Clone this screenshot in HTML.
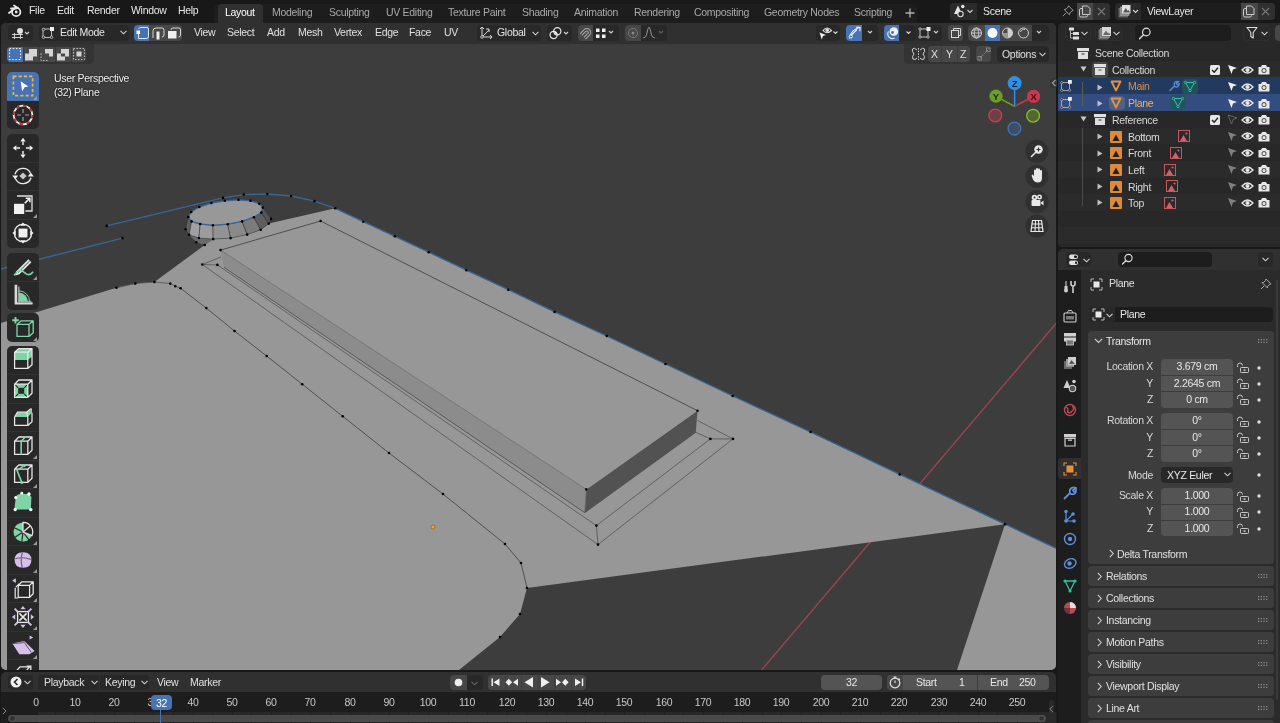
<!DOCTYPE html>
<html><head><meta charset="utf-8">
<style>
*{box-sizing:border-box;margin:0;padding:0}
html,body{width:1280px;height:723px;overflow:hidden;background:#181818;font-family:"Liberation Sans",sans-serif;font-size:10.5px;color:#e0e0e0}
.a{position:absolute}
.t{position:absolute;white-space:nowrap;line-height:12px;letter-spacing:-0.3px;will-change:transform}
.dd{position:absolute;background:#282828;border-radius:4px}
.bt{position:absolute;background:#474747}
.blue{background:#4772b3}
svg{position:absolute;overflow:visible}
</style></head><body>

<!-- TOP BAR -->
<div class="a" style="left:0;top:0;width:1280px;height:23px;background:#181818"></div>
<svg style="left:8px;top:4px" width="14" height="14" viewBox="0 0 14 14">
  <circle cx="8.2" cy="8" r="4.2" fill="none" stroke="#e8e8e8" stroke-width="1.8"/>
  <circle cx="8.2" cy="8" r="1.4" fill="#e8e8e8"/>
  <path d="M1 9 L6 5 M3 4.5 L8 4.5 M6 1.5 L10 4" stroke="#e8e8e8" stroke-width="1.8" stroke-linecap="round"/>
</svg>
<div class="t" style="left:29px;top:4px;color:#e6e6e6">File</div>
<div class="t" style="left:57px;top:4px;color:#e6e6e6">Edit</div>
<div class="t" style="left:87px;top:4px;color:#e6e6e6">Render</div>
<div class="t" style="left:131px;top:4px;color:#e6e6e6">Window</div>
<div class="t" style="left:178px;top:4px;color:#e6e6e6">Help</div>
<div class="a" style="left:214px;top:4px;width:703px;height:19px;background:#1d1d1d;border-radius:4px 4px 0 0"></div>
<div class="a" style="left:218px;top:4px;width:45px;height:19px;background:#303030;border-radius:4px 4px 0 0"></div>
<div class="t" style="left:225px;top:6px;color:#ffffff">Layout</div>
<div class="t" style="left:272px;top:6px;color:#a9a9a9">Modeling</div>
<div class="t" style="left:329px;top:6px;color:#a9a9a9">Sculpting</div>
<div class="t" style="left:386px;top:6px;color:#a9a9a9">UV Editing</div>
<div class="t" style="left:448px;top:6px;color:#a9a9a9">Texture Paint</div>
<div class="t" style="left:522px;top:6px;color:#a9a9a9">Shading</div>
<div class="t" style="left:574px;top:6px;color:#a9a9a9">Animation</div>
<div class="t" style="left:634px;top:6px;color:#a9a9a9">Rendering</div>
<div class="t" style="left:694px;top:6px;color:#a9a9a9">Compositing</div>
<div class="t" style="left:764px;top:6px;color:#a9a9a9">Geometry Nodes</div>
<div class="t" style="left:854px;top:6px;color:#a9a9a9">Scripting</div>
<svg style="left:905px;top:8px" width="10" height="10"><path d="M5 0.5V9.5M0.5 5H9.5" stroke="#b0b0b0" stroke-width="1.3"/></svg>

<!-- scene selector -->
<div class="a" style="left:950px;top:3px;width:160px;height:16.5px;background:#2a2a2a;border-radius:4px"></div>
<div class="a" style="left:977px;top:3px;width:100px;height:16.5px;background:#1d1d1d"></div>
<div class="a" style="left:1077px;top:3px;width:16px;height:16.5px;background:#474747"></div>
<div class="a" style="left:1093px;top:3px;width:17px;height:16.5px;background:#303030;border-radius:0 4px 4px 0"></div>
<div class="t" style="left:983px;top:5px;color:#e6e6e6">Scene</div>
<svg style="left:953px;top:4px" width="23" height="14" viewBox="0 0 23 14">
 <path d="M5 1.5L9 10H1Z" fill="#e8e8e8"/><circle cx="7.5" cy="10" r="2.7" fill="#2a2a2a" stroke="#d8d8d8" stroke-width="1.1"/><circle cx="9.8" cy="2.5" r="1.7" fill="#e8e8e8"/>
 <path d="M14.5 6l2.5 2.5 2.5-2.5" stroke="#d0d0d0" stroke-width="1.1" fill="none"/>
</svg>
<svg style="left:1062px;top:5px" width="12" height="12" viewBox="0 0 12 12">
 <path d="M6.5 0.8L11.2 5.5L9.8 6L7.8 8L7.5 9.8L2.2 4.5L4 4.2L6 2.2Z" fill="none" stroke="#999" stroke-width="1"/><path d="M4.5 7.5L0.8 11.2" stroke="#999" stroke-width="1"/>
</svg>
<svg style="left:1079px;top:5px" width="12" height="13" viewBox="0 0 12 13">
 <rect x="0.5" y="3.5" width="8" height="8.5" rx="1.5" fill="none" stroke="#c8c8c8" stroke-width="1"/><path d="M3.5 1H8.5L11 3.5V9.5H3.5Z" fill="#474747" stroke="#c8c8c8" stroke-width="1"/>
</svg>
<svg style="left:1097px;top:7px" width="9" height="9"><path d="M1 1L8 8M8 1L1 8" stroke="#777" stroke-width="1.1"/></svg>
<div class="a" style="left:1115px;top:3px;width:159.5px;height:16.5px;background:#2a2a2a;border-radius:4px"></div>
<div class="a" style="left:1141px;top:3px;width:100px;height:16.5px;background:#1d1d1d"></div>
<div class="a" style="left:1241px;top:3px;width:16.5px;height:16.5px;background:#474747"></div>
<div class="a" style="left:1257.5px;top:3px;width:17px;height:16.5px;background:#303030;border-radius:0 4px 4px 0"></div>
<div class="t" style="left:1147px;top:5px;color:#e6e6e6">ViewLayer</div>
<svg style="left:1118px;top:4px" width="23" height="14" viewBox="0 0 23 14">
 <rect x="1" y="4.5" width="8.5" height="8.5" fill="#5a5a5a" stroke="#888" stroke-width=".6"/><rect x="2.5" y="3" width="8.5" height="8.5" fill="#888" stroke="#aaa" stroke-width=".6"/><rect x="4" y="1" width="8.5" height="8.5" fill="#e0e0e0"/><path d="M5 8.5L7.8 4L9.8 7L10.8 6L12 8.5Z" fill="#555"/>
 <path d="M15 6l2.5 2.5 2.5-2.5" stroke="#d0d0d0" stroke-width="1.1" fill="none"/>
</svg>
<svg style="left:1243px;top:5px" width="12" height="13" viewBox="0 0 12 13">
 <rect x="0.5" y="3.5" width="8" height="8.5" rx="1.5" fill="none" stroke="#c8c8c8" stroke-width="1"/><path d="M3.5 1H8.5L11 3.5V9.5H3.5Z" fill="#474747" stroke="#c8c8c8" stroke-width="1"/>
</svg>
<svg style="left:1261px;top:7px" width="9" height="9"><path d="M1 1L8 8M8 1L1 8" stroke="#777" stroke-width="1.1"/></svg>

<!-- VIEWPORT AREA -->
<div id="vp" class="a" style="left:1px;top:23px;width:1055px;height:647px;background:#3d3d3d;border-radius:5px;overflow:hidden">
<svg style="left:0;top:0" width="1055" height="647" viewBox="1 23 1055 647">
<!-- GEOMETRY -->
<line x1="1056" y1="323.5" x2="761.6" y2="670" stroke="#9a4452" stroke-width="1.4"/>
<polygon points="1,323 116.4,287.8 135.3,283.6 154.4,282 204.7,245 213.2,239.1 230.6,238.1 247.2,234.6 260.7,229.7 268.8,223.6 335.2,208.3 1005,524.2 527,588 520,614 500,637 459,670 1,670" fill="#979797"/>
<polygon points="1005,524.2 1056,548.5 1056,670 957,670" fill="#979797"/>
<polygon points="189.1,234.8 198.9,238 213.2,239.1 204.7,245 196.3,242.3" fill="#6a6a6a"/>
<polygon points="188.3,217 191.6,221.4 189.1,234.8 185.6,229.3" fill="#5f5f5f" stroke="#333" stroke-width="0.6" stroke-opacity="0.8"/>
<polygon points="191.6,221.4 200.2,224 198.9,238 189.1,234.8" fill="#a0a0a0" stroke="#333" stroke-width="0.6" stroke-opacity="0.8"/>
<polygon points="200.2,224 212.9,225.3 213.2,239.1 198.9,238" fill="#9c9c9c" stroke="#333" stroke-width="0.6" stroke-opacity="0.8"/>
<polygon points="212.9,225.3 227.7,224.2 230.6,238.1 213.2,239.1" fill="#939393" stroke="#333" stroke-width="0.6" stroke-opacity="0.8"/>
<polygon points="227.7,224.2 242.1,221.4 247.2,234.6 230.6,238.1" fill="#8a8a8a" stroke="#333" stroke-width="0.6" stroke-opacity="0.8"/>
<polygon points="242.1,221.4 253.9,217.2 260.7,229.7 247.2,234.6" fill="#7c7c7c" stroke="#333" stroke-width="0.6" stroke-opacity="0.8"/>
<polygon points="253.9,217.2 261.3,212.6 268.8,223.6 260.7,229.7" fill="#5e5e5e" stroke="#333" stroke-width="0.6" stroke-opacity="0.8"/>
<polygon points="261.3,212.6 262.8,207.6 271.1,218.9 268.8,223.6" fill="#555555" stroke="#333" stroke-width="0.6" stroke-opacity="0.8"/>
<polygon points="188.3,217 191.2,212 199.3,207 211.4,203 224.8,200.8 238.5,199.8 250.5,200.8 259.3,203.7 262.8,207.6 261.3,212.6 253.9,217.2 242.1,221.4 227.7,224.2 212.9,225.3 200.2,224 191.6,221.4" fill="#989898"/>
<polygon points="220.6,250.1 586.3,489.4 584.7,512.7 224,267.3" fill="#8b8c8b"/>
<polygon points="586.3,489.4 697.5,410.7 695.8,432.3 584.7,512.7" fill="#525252"/>
<polygon points="220.6,250.1 320.6,221 697.5,410.7 586.3,489.4" fill="#979797"/>
<polyline points="220.6,250.1 320.6,221 697.5,410.7" stroke="#383838" stroke-width="0.75" fill="none"/>
<polyline points="220.6,250.1 586.3,489.4" stroke="#6a6a6a" stroke-width="0.7" fill="none"/>
<polyline points="224,267.3 584.7,512.7 695.8,432.3" stroke="#4a4a4a" stroke-width="0.8" fill="none"/>
<polyline points="586.3,489.4 584.7,512.7" stroke="#6a6a6a" stroke-width="0.6" fill="none"/>
<polyline points="202.3,264.5 598,544.6 733,438.9 697.5,420.5" stroke="#505050" stroke-width="0.75" fill="none"/>
<polyline points="217.4,264.9 596.4,525.6 710.4,438.9 695.8,432.3" stroke="#505050" stroke-width="0.75" fill="none"/>
<polyline points="202.3,264.5 217.4,264.9" stroke="#505050" stroke-width="0.75" fill="none"/>
<polyline points="202.3,264.5 221,257" stroke="#505050" stroke-width="0.75" fill="none"/>
<polyline points="710.4,438.9 733,438.9" stroke="#505050" stroke-width="0.75" fill="none"/>
<polyline points="596.4,525.6 598,544.6" stroke="#505050" stroke-width="0.75" fill="none"/>
<polyline points="180.6,288.3 206.3,308.1 234.5,331 266.7,356 302.2,384.2 342.7,416.3 389,453 443,494 505,544 521,563 527,588" stroke="#383838" stroke-width="0.75" fill="none"/>
<polyline points="116.4,287.8 135.3,283.6 154.4,282 170.2,283.6 175.3,286.2 180.6,288.3" stroke="#555" stroke-width="0.8" fill="none"/>
<polyline points="106.7,225.9 122.5,238.1" stroke="#383838" stroke-width="0.75" fill="none"/>
<polyline points="223,197.9 243.8,194.6 267.3,194 291.1,196 314.5,201.1 335.2,208.3 363.3,221.7 394.8,236.3 428.7,252.2 466.3,270.2 508.3,289.7 554.6,311.9 606.8,336 665.5,364 732.7,396 810.6,432 899.7,474.4 1005,524.2 1060,550.1" stroke="#3a6696" stroke-width="1.35" fill="none" stroke-linejoin="round"/>
<polyline points="1,269 122.5,238.1" stroke="#3a6696" stroke-width="1.35" fill="none" stroke-linejoin="round"/>
<polyline points="106.7,225.9 223,197.9" stroke="#3a6696" stroke-width="1.35" fill="none" stroke-linejoin="round"/>
<polygon points="188.3,217 191.2,212 199.3,207 211.4,203 224.8,200.8 238.5,199.8 250.5,200.8 259.3,203.7 262.8,207.6 261.3,212.6 253.9,217.2 242.1,221.4 227.7,224.2 212.9,225.3 200.2,224 191.6,221.4" stroke="#3a6696" stroke-width="1.35" fill="none" stroke-linejoin="round"/>
<circle cx="223" cy="197.9" r="1.3" fill="#000"/>
<circle cx="243.8" cy="194.6" r="1.3" fill="#000"/>
<circle cx="267.3" cy="194" r="1.3" fill="#000"/>
<circle cx="291.1" cy="196" r="1.3" fill="#000"/>
<circle cx="314.5" cy="201.1" r="1.3" fill="#000"/>
<circle cx="335.2" cy="208.3" r="1.3" fill="#000"/>
<circle cx="363.3" cy="221.7" r="1.3" fill="#000"/>
<circle cx="394.8" cy="236.3" r="1.3" fill="#000"/>
<circle cx="428.7" cy="252.2" r="1.3" fill="#000"/>
<circle cx="466.3" cy="270.2" r="1.3" fill="#000"/>
<circle cx="508.3" cy="289.7" r="1.3" fill="#000"/>
<circle cx="554.6" cy="311.9" r="1.3" fill="#000"/>
<circle cx="606.8" cy="336" r="1.3" fill="#000"/>
<circle cx="665.5" cy="364" r="1.3" fill="#000"/>
<circle cx="732.7" cy="396" r="1.3" fill="#000"/>
<circle cx="810.6" cy="432" r="1.3" fill="#000"/>
<circle cx="899.7" cy="474.4" r="1.3" fill="#000"/>
<circle cx="1005" cy="524.2" r="1.3" fill="#000"/>
<circle cx="122.5" cy="238.1" r="1.3" fill="#000"/>
<circle cx="106.7" cy="225.9" r="1.3" fill="#000"/>
<circle cx="188.3" cy="217" r="1.3" fill="#000"/>
<circle cx="191.2" cy="212" r="1.3" fill="#000"/>
<circle cx="199.3" cy="207" r="1.3" fill="#000"/>
<circle cx="211.4" cy="203" r="1.3" fill="#000"/>
<circle cx="224.8" cy="200.8" r="1.3" fill="#000"/>
<circle cx="238.5" cy="199.8" r="1.3" fill="#000"/>
<circle cx="250.5" cy="200.8" r="1.3" fill="#000"/>
<circle cx="259.3" cy="203.7" r="1.3" fill="#000"/>
<circle cx="262.8" cy="207.6" r="1.3" fill="#000"/>
<circle cx="261.3" cy="212.6" r="1.3" fill="#000"/>
<circle cx="253.9" cy="217.2" r="1.3" fill="#000"/>
<circle cx="242.1" cy="221.4" r="1.3" fill="#000"/>
<circle cx="227.7" cy="224.2" r="1.3" fill="#000"/>
<circle cx="212.9" cy="225.3" r="1.3" fill="#000"/>
<circle cx="200.2" cy="224" r="1.3" fill="#000"/>
<circle cx="191.6" cy="221.4" r="1.3" fill="#000"/>
<circle cx="185.6" cy="229.3" r="1.3" fill="#000"/>
<circle cx="189.1" cy="234.8" r="1.3" fill="#000"/>
<circle cx="198.9" cy="238" r="1.3" fill="#000"/>
<circle cx="213.2" cy="239.1" r="1.3" fill="#000"/>
<circle cx="230.6" cy="238.1" r="1.3" fill="#000"/>
<circle cx="247.2" cy="234.6" r="1.3" fill="#000"/>
<circle cx="260.7" cy="229.7" r="1.3" fill="#000"/>
<circle cx="268.8" cy="223.6" r="1.3" fill="#000"/>
<circle cx="271.1" cy="218.9" r="1.3" fill="#000"/>
<circle cx="196.3" cy="242.3" r="1.3" fill="#000"/>
<circle cx="204.7" cy="245" r="1.3" fill="#000"/>
<circle cx="180.6" cy="288.3" r="1.3" fill="#000"/>
<circle cx="206.3" cy="308.1" r="1.3" fill="#000"/>
<circle cx="234.5" cy="331" r="1.3" fill="#000"/>
<circle cx="266.7" cy="356" r="1.3" fill="#000"/>
<circle cx="302.2" cy="384.2" r="1.3" fill="#000"/>
<circle cx="342.7" cy="416.3" r="1.3" fill="#000"/>
<circle cx="389" cy="453" r="1.3" fill="#000"/>
<circle cx="443" cy="494" r="1.3" fill="#000"/>
<circle cx="505" cy="544" r="1.3" fill="#000"/>
<circle cx="521" cy="563" r="1.3" fill="#000"/>
<circle cx="527" cy="588" r="1.3" fill="#000"/>
<circle cx="116.4" cy="287.8" r="1.3" fill="#000"/>
<circle cx="135.3" cy="283.6" r="1.3" fill="#000"/>
<circle cx="154.4" cy="282" r="1.3" fill="#000"/>
<circle cx="170.2" cy="283.6" r="1.3" fill="#000"/>
<circle cx="175.3" cy="286.2" r="1.3" fill="#000"/>
<circle cx="220.6" cy="250.1" r="1.3" fill="#000"/>
<circle cx="320.6" cy="221" r="1.3" fill="#000"/>
<circle cx="697.5" cy="410.7" r="1.3" fill="#000"/>
<circle cx="586.3" cy="489.4" r="1.3" fill="#000"/>
<circle cx="202.3" cy="264.5" r="1.3" fill="#000"/>
<circle cx="217.4" cy="264.9" r="1.3" fill="#000"/>
<circle cx="598" cy="544.6" r="1.3" fill="#000"/>
<circle cx="733" cy="438.9" r="1.3" fill="#000"/>
<circle cx="596.4" cy="525.6" r="1.3" fill="#000"/>
<circle cx="710.4" cy="438.9" r="1.3" fill="#000"/>
<circle cx="520" cy="614" r="1.3" fill="#000"/>
<circle cx="500" cy="637" r="1.3" fill="#000"/>
<circle cx="433" cy="527" r="2" fill="#f2a23a" stroke="#6a4a20" stroke-width="0.5"/>
<!-- /GEOMETRY -->
</svg>
</div>
<!-- viewport header -->
<div class="a" style="left:1px;top:23px;width:1055px;height:21px;background:#303030;border-radius:5px 5px 0 0"></div>
<div class="a" style="left:1px;top:44px;width:93px;height:20px;background:#303030;opacity:.75;border-radius:0 0 5px 0"></div>
<div class="a" style="left:904px;top:44px;width:152px;height:20px;background:#303030;opacity:.75;border-radius:0 0 0 5px"></div>
<!-- editor type -->
<div class="dd" style="left:8px;top:25px;width:25px;height:16px"></div>
<svg style="left:11px;top:27px" width="20" height="12" viewBox="0 0 20 12">
 <circle cx="9" cy="4" r="3" fill="#e0e0e0"/>
 <path d="M1 7.5H12M1 10.5H12M3.5 6V12M9.5 8V12" stroke="#d0d0d0" stroke-width="1"/>
 <path d="M14 5l2 2 2-2" stroke="#d0d0d0" stroke-width="1.1" fill="none"/>
</svg>
<!-- mode -->
<div class="dd" style="left:39px;top:25px;width:90px;height:16px"></div>
<svg style="left:42px;top:27px" width="13" height="12" viewBox="0 0 13 12">
 <rect x="1" y="2" width="8.5" height="8.5" fill="none" stroke="#cfcfcf" stroke-width="0.9"/>
 <circle cx="1.5" cy="2.5" r="1.3" fill="#282828" stroke="#cfcfcf" stroke-width=".8"/>
 <circle cx="1.5" cy="10.2" r="1.3" fill="#282828" stroke="#cfcfcf" stroke-width=".8"/>
 <circle cx="9.5" cy="10.2" r="1.3" fill="#282828" stroke="#cfcfcf" stroke-width=".8"/>
 <rect x="8" y="0" width="4" height="4" fill="#f0f0f0"/>
</svg>
<div class="t" style="left:60px;top:26.4px;color:#e6e6e6">Edit Mode</div>
<svg style="left:120px;top:30px" width="7" height="5"><path d="M0.5 0.8l3 3 3-3" stroke="#d0d0d0" stroke-width="1.1" fill="none"/></svg>
<!-- select mode -->
<div class="a blue" style="left:134px;top:25px;width:15px;height:16px;border-radius:4px 0 0 4px"></div>
<div class="bt" style="left:149px;top:25px;width:17px;height:16px"></div>
<div class="bt" style="left:166px;top:25px;width:16px;height:16px;border-radius:0 4px 4px 0"></div>
<svg style="left:135px;top:26px" width="48" height="14" viewBox="0 0 48 14">
 <path d="M3.5 3 Q4 1.5 6 1.5 H12 Q13.5 1.5 13.5 3 V10.5 Q13.5 12.5 11.5 12.5 H3.5 V8" stroke="#e8e8e8" stroke-width="1" fill="none"/>
 <rect x="1.5" y="4.5" width="3.5" height="3.5" fill="#fff"/>
 <path d="M18 12 V5 Q18 2 21 2 H27 Q29 2 29 4 V9 Q29 11 27 11" stroke="#d8d8d8" stroke-width="1" fill="none"/>
 <rect x="21.5" y="5.5" width="3" height="8" fill="#f0f0f0"/>
 <path d="M36 4 Q36 2 38 2 H44 Q45.5 2 45.5 4 V9 Q45.5 11 43.5 11" stroke="#d8d8d8" stroke-width="1" fill="none"/>
 <rect x="33" y="5" width="8.5" height="7.5" fill="#f0f0f0"/>
</svg>
<div class="t" style="left:194px;top:26.4px;color:#e0e0e0">View</div>
<div class="t" style="left:227px;top:26.4px;color:#e0e0e0">Select</div>
<div class="t" style="left:267px;top:26.4px;color:#e0e0e0">Add</div>
<div class="t" style="left:298px;top:26.4px;color:#e0e0e0">Mesh</div>
<div class="t" style="left:334px;top:26.4px;color:#e0e0e0">Vertex</div>
<div class="t" style="left:375px;top:26.4px;color:#e0e0e0">Edge</div>
<div class="t" style="left:409px;top:26.4px;color:#e0e0e0">Face</div>
<div class="t" style="left:444px;top:26.4px;color:#e0e0e0">UV</div>
<!-- global -->
<div class="dd" style="left:477px;top:25px;width:64px;height:16px"></div>
<svg style="left:479px;top:26px" width="14" height="14" viewBox="0 0 14 14">
 <path d="M3 1V11H13M3 11L10 4M1 3L3 1L5 3M11 9L13 11L11 13" stroke="#d8d8d8" stroke-width="1" fill="none"/>
 <path d="M7 3L10 3L10 6" stroke="#d8d8d8" stroke-width="1" fill="none"/>
 <circle cx="3" cy="11" r="1.3" fill="#282828" stroke="#d8d8d8" stroke-width=".8"/>
</svg>
<div class="t" style="left:497px;top:26.4px;color:#e6e6e6">Global</div>
<svg style="left:532px;top:31px" width="7" height="5"><path d="M0.5 0.8l3 3 3-3" stroke="#d0d0d0" stroke-width="1.1" fill="none"/></svg>
<!-- pivot -->
<div class="dd" style="left:547px;top:25px;width:25px;height:16px"></div>
<svg style="left:549px;top:26px" width="22" height="14" viewBox="0 0 22 14">
 <circle cx="8.3" cy="5.3" r="3.6" fill="none" stroke="#e8e8e8" stroke-width="1.2"/><circle cx="4.6" cy="9" r="3.6" fill="none" stroke="#e8e8e8" stroke-width="1.2"/><circle cx="6.45" cy="7.15" r="1.3" fill="#e8e8e8"/>
 <path d="M15 6l2 2 2-2" stroke="#d0d0d0" stroke-width="1.1" fill="none"/>
</svg>
<!-- snap -->
<div class="dd" style="left:578px;top:25px;width:41px;height:16px"></div>
<div class="bt" style="left:578px;top:25px;width:15px;height:16px;border-radius:4px 0 0 4px"></div>
<svg style="left:579px;top:26px" width="40" height="14" viewBox="0 0 40 14">
 <path d="M2 8.5 L6 4.5 A2.6 2.6 0 0 1 9.7 8.2 L5.7 12.2" stroke="#a8a8a8" stroke-width="3.4" fill="none"/><path d="M2 8.5 L6 4.5 A2.6 2.6 0 0 1 9.7 8.2 L5.7 12.2" stroke="#474747" stroke-width="1.3" fill="none"/>
 <rect x="17" y="2.5" width="3.5" height="3.5" fill="#f0f0f0"/><rect x="23" y="2.5" width="3.5" height="3.5" fill="#f0f0f0"/>
 <rect x="17" y="8.5" width="3.5" height="3.5" fill="#f0f0f0"/><rect x="23" y="8.5" width="3.5" height="3.5" fill="#f0f0f0"/>
 <path d="M30 5l2 2 2-2" stroke="#d0d0d0" stroke-width="1.1" fill="none"/>
</svg>
<!-- proportional -->
<div class="dd" style="left:625px;top:25px;width:42px;height:16px"></div>
<div class="bt" style="left:625px;top:25px;width:16px;height:16px;border-radius:4px 0 0 4px"></div>
<svg style="left:626px;top:26px" width="40" height="14" viewBox="0 0 40 14">
 <circle cx="7" cy="7" r="4.5" fill="none" stroke="#7a7a7a" stroke-width="1"/><circle cx="7" cy="7" r="1.5" fill="#8a8a8a"/>
 <path d="M17 12 Q20 12 21 7 Q22 1.5 23 1.5 Q24 1.5 25 7 Q26 12 29 12" stroke="#8e8e8e" stroke-width="1.1" fill="none"/>
 <path d="M33 5l2 2 2-2" stroke="#5e5e5e" stroke-width="1.1" fill="none"/>
</svg>
<!-- visibility -->
<div class="dd" style="left:816px;top:25px;width:24px;height:16px"></div>
<svg style="left:818px;top:26px" width="22" height="14" viewBox="0 0 22 14">
 <path d="M5 4.5 Q9 -0.5 13.5 4.5 Q9 9 5 4.5Z" fill="none" stroke="#e8e8e8" stroke-width="1.1"/><circle cx="9.2" cy="4.3" r="1.8" fill="#e8e8e8"/>
 <path d="M1.5 6.5 L8 9 L5 10 L3.8 13.5Z" fill="#f0f0f0"/>
 <path d="M15.5 5.5l2 2 2-2" stroke="#d0d0d0" stroke-width="1.1" fill="none"/>
</svg>
<!-- gizmo -->
<div class="dd" style="left:846px;top:25px;width:32px;height:16px"></div>
<div class="a blue" style="left:846px;top:25px;width:16px;height:16px;border-radius:4px 0 0 4px"></div>
<svg style="left:847px;top:26px" width="31" height="14" viewBox="0 0 31 14">
 <path d="M2.5 12.5 Q3.5 4 12.5 1.5 M9 1.2 H13 V5.2 M4 9.5 L10 3.5" stroke="#f0f0f0" stroke-width="1.1" fill="none"/>
 <circle cx="3.8" cy="10.5" r="1.6" fill="#4772b3" stroke="#f0f0f0" stroke-width="1"/>
 <path d="M21 5l2 2 2-2" stroke="#d0d0d0" stroke-width="1.1" fill="none"/>
</svg>
<!-- overlays -->
<div class="dd" style="left:884px;top:25px;width:32px;height:16px"></div>
<div class="a blue" style="left:884px;top:25px;width:15px;height:16px;border-radius:4px 0 0 4px"></div>
<svg style="left:885px;top:26px" width="31" height="14" viewBox="0 0 31 14">
 <circle cx="8.8" cy="5.5" r="4.3" fill="#f0f0f0"/><circle cx="7.5" cy="6.5" r="1.4" fill="#4772b3"/>
 <path d="M3.5 5.5 A4.6 4.6 0 0 0 9.5 12" stroke="#f0f0f0" stroke-width="1.1" fill="none"/>
 <path d="M21.5 5.5l2 2 2-2" stroke="#d0d0d0" stroke-width="1.1" fill="none"/>
</svg>
<!-- mesh overlay -->
<div class="dd" style="left:917px;top:25px;width:25px;height:16px"></div>
<svg style="left:918px;top:26px" width="24" height="14" viewBox="0 0 24 14">
 <rect x="2" y="3" width="8" height="8" fill="none" stroke="#cfcfcf" stroke-width=".9"/>
 <circle cx="2" cy="3" r="1.2" fill="#282828" stroke="#cfcfcf" stroke-width=".8"/><circle cx="2" cy="11" r="1.2" fill="#282828" stroke="#cfcfcf" stroke-width=".8"/><circle cx="10" cy="11" r="1.2" fill="#282828" stroke="#cfcfcf" stroke-width=".8"/>
 <rect x="8.5" y="1" width="4" height="4" fill="#f0f0f0"/>
 <path d="M16 5l2 2 2-2" stroke="#d0d0d0" stroke-width="1.1" fill="none"/>
</svg>
<!-- xray -->
<div class="bt" style="left:948px;top:25px;width:15px;height:16px;border-radius:4px"></div>
<svg style="left:949px;top:26px" width="14" height="14" viewBox="0 0 14 14">
 <rect x="2.5" y="4.5" width="7" height="7" fill="none" stroke="#d8d8d8" stroke-width="1"/>
 <path d="M4.5 4.5 V2.5 H11.5 V9.5 H9.5" stroke="#d8d8d8" stroke-width="1" fill="none"/>
</svg>
<!-- shading -->
<div class="dd" style="left:968px;top:25px;width:81px;height:16px"></div>
<div class="bt" style="left:968px;top:25px;width:17px;height:16px;border-radius:4px 0 0 4px"></div>
<div class="a blue" style="left:985px;top:25px;width:15px;height:16px"></div>
<div class="bt" style="left:1000px;top:25px;width:32px;height:16px"></div>
<svg style="left:969px;top:26px" width="80" height="14" viewBox="0 0 80 14">
 <circle cx="7.5" cy="7" r="5" fill="none" stroke="#d0d0d0" stroke-width="1"/>
 <ellipse cx="7.5" cy="7" rx="2.2" ry="5" fill="none" stroke="#d0d0d0" stroke-width=".9"/>
 <path d="M2.5 7H12.5M3.5 4H11.5M3.5 10H11.5" stroke="#d0d0d0" stroke-width=".9"/>
 <circle cx="23.5" cy="7" r="5" fill="#fff"/>
 <circle cx="38.5" cy="7" r="5" fill="none" stroke="#d0d0d0" stroke-width="1"/>
 <path d="M38.5 2 A5 5 0 0 1 38.5 12Z" fill="#d0d0d0"/><path d="M38.5 7 H33.5 A5 5 0 0 0 38.5 12Z" fill="#9a9a9a"/>
 <circle cx="54.5" cy="7" r="5" fill="none" stroke="#d0d0d0" stroke-width="1"/>
 <path d="M51.5 6 A3.5 3.5 0 0 1 56 3.5" stroke="#d0d0d0" stroke-width="1" fill="none"/>
 <path d="M68 5l2 2 2-2" stroke="#d0d0d0" stroke-width="1.1" fill="none"/>
</svg>
<!-- row 2 left: select box mode -->
<div class="bt" style="left:7px;top:46.5px;width:79px;height:15.5px;border-radius:4px"></div>
<div class="a blue" style="left:7px;top:46.5px;width:16px;height:15.5px;border-radius:4px 0 0 4px"></div>
<div class="a" style="left:23px;top:46.5px;width:1px;height:15.5px;background:#3a3a3a"></div>
<div class="a" style="left:39px;top:46.5px;width:1px;height:15.5px;background:#3a3a3a"></div>
<div class="a" style="left:55px;top:46.5px;width:1px;height:15.5px;background:#3a3a3a"></div>
<div class="a" style="left:71px;top:46.5px;width:1px;height:15.5px;background:#3a3a3a"></div>
<svg style="left:7px;top:46px" width="80" height="16" viewBox="0 0 80 16">
 <rect x="2.5" y="2.5" width="11" height="11" fill="none" stroke="#f0f0f0" stroke-width="1.1" stroke-dasharray="1.6 1.6"/>
 <path d="M18 7.5H22V3H30V10.5H26V14.5H18Z" fill="#d4d4d4"/>
 <path d="M34 7.5V14.5H41" stroke="#bdbdbd" stroke-width="1" stroke-dasharray="1.5 1.5" fill="none"/><path d="M38 3H46V10.5H42V7.5H38Z" fill="#d4d4d4"/>
 <path d="M50 7.5H54V3H62V10.5H58V14.5H50Z M54 7.5V10.5H58V7.5Z" fill="#d4d4d4" fill-rule="evenodd"/>
 <rect x="66.5" y="2.5" width="11" height="11" fill="none" stroke="#bdbdbd" stroke-width="1" stroke-dasharray="1.5 1.5"/>
 <rect x="69.5" y="5.5" width="5" height="5" fill="#d4d4d4"/>
</svg>
<!-- row 2 right -->
<svg style="left:911px;top:47px" width="15" height="14" viewBox="0 0 15 14">
 <path d="M7.5 1V13" stroke="#cfcfcf" stroke-width="1" stroke-dasharray="1.5 1.2"/>
 <path d="M6 3 Q3 0 1.5 2 Q0.5 4 3 7 Q0.5 10 2 12 Q4 13.5 6 11 M9 3 Q12 0 13.5 2 Q14.5 4 12 7 Q14.5 10 13 12 Q11 13.5 9 11" stroke="#cfcfcf" stroke-width="1" fill="none"/>
</svg>
<div class="bt" style="left:928px;top:46px;width:42px;height:16px;border-radius:4px"></div>
<div class="a" style="left:941px;top:46px;width:1px;height:16px;background:#3d3d3d"></div>
<div class="a" style="left:957px;top:46px;width:1px;height:16px;background:#3d3d3d"></div>
<div class="t" style="left:931px;top:48px;color:#e0e0e0">X</div>
<div class="t" style="left:946px;top:48px;color:#e0e0e0">Y</div>
<div class="t" style="left:960px;top:48px;color:#e0e0e0">Z</div>
<div class="bt" style="left:976px;top:46px;width:15px;height:16px;border-radius:4px;background:#474747"></div>
<svg style="left:977px;top:47px" width="14" height="14" viewBox="0 0 14 14">
 <path d="M3 11 L11 3" stroke="#8a8a8a" stroke-width="1" stroke-dasharray="1.5 1"/>
 <rect x="1" y="9.5" width="3.5" height="3.5" fill="none" stroke="#8a8a8a" stroke-width=".9"/><rect x="9.5" y="1" width="3.5" height="3.5" fill="none" stroke="#8a8a8a" stroke-width=".9"/>
</svg>
<div class="dd" style="left:997px;top:46px;width:52px;height:16px"></div>
<div class="t" style="left:1002px;top:48px;color:#e0e0e0">Options</div>
<svg style="left:1039px;top:52px" width="7" height="5"><path d="M0.5 0.8l3 3 3-3" stroke="#d0d0d0" stroke-width="1.1" fill="none"/></svg>
<!-- TOOLBAR -->
<div class="a" style="left:0;top:0;width:46px;height:670px;overflow:hidden">
<div class="a" style="left:7px;top:72px;width:32px;height:57.0px;background:#282828;border-radius:5px"></div>
<div class="a" style="left:7px;top:100.0px;width:32px;height:1px;background:#323232"></div>
<div class="a" style="left:7px;top:133.7px;width:32px;height:114.0px;background:#282828;border-radius:5px"></div>
<div class="a" style="left:7px;top:161.7px;width:32px;height:1px;background:#323232"></div>
<div class="a" style="left:7px;top:190.2px;width:32px;height:1px;background:#323232"></div>
<div class="a" style="left:7px;top:218.7px;width:32px;height:1px;background:#323232"></div>
<div class="a" style="left:7px;top:252.6px;width:32px;height:57.0px;background:#282828;border-radius:5px"></div>
<div class="a" style="left:7px;top:280.6px;width:32px;height:1px;background:#323232"></div>
<div class="a" style="left:7px;top:313.4px;width:32px;height:28.5px;background:#282828;border-radius:5px"></div>
<div class="a" style="left:7px;top:346.2px;width:32px;height:342.0px;background:#282828;border-radius:5px"></div>
<div class="a" style="left:7px;top:374.2px;width:32px;height:1px;background:#323232"></div>
<div class="a" style="left:7px;top:402.7px;width:32px;height:1px;background:#323232"></div>
<div class="a" style="left:7px;top:431.2px;width:32px;height:1px;background:#323232"></div>
<div class="a" style="left:7px;top:459.7px;width:32px;height:1px;background:#323232"></div>
<div class="a" style="left:7px;top:488.2px;width:32px;height:1px;background:#323232"></div>
<div class="a" style="left:7px;top:516.7px;width:32px;height:1px;background:#323232"></div>
<div class="a" style="left:7px;top:545.2px;width:32px;height:1px;background:#323232"></div>
<div class="a" style="left:7px;top:573.7px;width:32px;height:1px;background:#323232"></div>
<div class="a" style="left:7px;top:602.2px;width:32px;height:1px;background:#323232"></div>
<div class="a" style="left:7px;top:630.7px;width:32px;height:1px;background:#323232"></div>
<div class="a" style="left:7px;top:659.2px;width:32px;height:1px;background:#323232"></div>
<div class="a blue" style="left:7px;top:72px;width:32px;height:28.5px;border-radius:5px 5px 0 0"></div>
<svg style="left:11px;top:74.2px" width="24" height="24" viewBox="0 0 20 20"><rect x="2" y="2" width="16" height="16" fill="none" stroke="#f0b640" stroke-width="1.4" stroke-dasharray="2.6 1.8"/><path d="M8 6 L14.5 10.5 L11.3 11 L9.3 14.5Z" fill="#fff"/></svg>
<svg style="left:11px;top:102.8px" width="24" height="24" viewBox="0 0 20 20"><circle cx="10" cy="10" r="7.8" fill="none" stroke="#f4f4f4" stroke-width="1.5"/><circle cx="10" cy="10" r="7.8" fill="none" stroke="#b02828" stroke-width="1.5" stroke-dasharray="3 3.1"/><path d="M10 5V8.3M10 11.7V15M5 10H8.3M11.7 10H15" stroke="#a0a0a0" stroke-width="1"/></svg>
<svg style="left:11px;top:135.9px" width="24" height="24" viewBox="0 0 20 20"><path d="M10 1.5L7.8 4.5H12.2ZM10 18.5L7.8 15.5H12.2ZM1.5 10L4.5 7.8V12.2ZM18.5 10L15.5 7.8V12.2Z" fill="#f0f0f0"/><path d="M10 4.5V7.5M10 12.5V15.5M4.5 10H7.5M12.5 10H15.5" stroke="#f0f0f0" stroke-width="1.2"/></svg>
<svg style="left:11px;top:164.4px" width="24" height="24" viewBox="0 0 20 20"><path d="M3.3 8.5 A7 7 0 0 1 16.2 7.5 M16.7 11.5 A7 7 0 0 1 3.8 12.5" stroke="#e8e8e8" stroke-width="1.15" fill="none"/><path d="M1 9.5H6L3.5 13ZM14 10.5H19L16.5 7Z" fill="#f0f0f0"/><path d="M10 7L13 10L10 13L7 10Z" fill="#c8c8c8"/></svg>
<svg style="left:11px;top:192.9px" width="24" height="24" viewBox="0 0 20 20"><path d="M5 2.5H17.5V15H12" stroke="#e0e0e0" stroke-width="1.1" fill="none"/><rect x="2.5" y="9" width="8.5" height="8.5" fill="#f0f0f0"/><path d="M11.5 8.5L15.5 4.5M12.3 4.3H15.7V7.7" stroke="#f0f0f0" stroke-width="1.3" fill="none"/></svg>
<svg style="left:11px;top:221.4px" width="24" height="24" viewBox="0 0 20 20"><circle cx="10" cy="10" r="7.3" fill="none" stroke="#e8e8e8" stroke-width="1.1"/><rect x="6.3" y="6.3" width="7.4" height="7.4" fill="#f0f0f0"/><path d="M10 1.2L7.8 4H12.2ZM10 18.8L7.8 16H12.2ZM1.2 10L4 7.8V12.2ZM18.8 10L16 7.8V12.2Z" fill="#f0f0f0"/></svg>
<svg style="left:11px;top:254.9px" width="24" height="24" viewBox="0 0 20 20"><path d="M4.5 13.5 L14.5 3.5 L17 6 L7 16 L3.5 17Z" fill="#e8e8e8"/><path d="M6 14.5L15.5 5" stroke="#282828" stroke-width=".7"/><path d="M2.5 17 Q7 10.5 11 14.5 Q15 18.5 18.5 14" stroke="#7fd4a6" stroke-width="1.3" fill="none"/></svg>
<svg style="left:11px;top:283.4px" width="24" height="24" viewBox="0 0 20 20"><path d="M3 1.5H5.2V16H18V18H3Z" fill="#d8d8d8"/><path d="M6.5 3V15.5H17" stroke="#9a9a9a" stroke-width="1.3" fill="none"/><path d="M6.5 15.5V8 A7.5 7.5 0 0 1 14 15.5Z" fill="#7fd4a6"/><path d="M6.5 6.5 A9 9 0 0 1 15.5 15.5" stroke="#7fd4a6" stroke-width=".8" fill="none"/></svg>
<svg style="left:11px;top:315.6px" width="24" height="24" viewBox="0 0 20 20"><path d="M5 7H15V17H5Z M5 7L8.5 4H18.5L15 7 M18.5 4V14L15 17" stroke="#7fd4a6" stroke-width="1.1" fill="none" stroke-linejoin="round"/><path d="M1 3.5H6.5M3.75 0.75V6.25" stroke="#7fd4a6" stroke-width="1.6"/></svg>
<svg style="left:11px;top:348.4px" width="24" height="24" viewBox="0 0 20 20"><path d="M3 3.5L6.5 0.5H17.5V7L14 10H3Z" fill="#7fd4a6"/><path d="M3 3.5H14V17.0H3Z M3 3.5L6.5 0.5H17.5L14 3.5 M17.5 0.5V14.0L14 17.0" stroke="#e8e8e8" stroke-width="1.05" fill="none" stroke-linejoin="round"/></svg>
<svg style="left:11px;top:376.9px" width="24" height="24" viewBox="0 0 20 20"><rect x="3" y="6" width="11" height="11" fill="#7fd4a6"/><rect x="6" y="9" width="5" height="5" fill="#282828"/><path d="M3 6L6 9M14 6L11 9M3 17L6 14M14 17L11 14" stroke="#282828" stroke-width=".9"/><path d="M3 6H14V17H3Z M3 6L6.5 2.5H17.5L14 6 M17.5 2.5V13.5L14 17" stroke="#e8e8e8" stroke-width="1.05" fill="none" stroke-linejoin="round"/></svg>
<svg style="left:11px;top:405.4px" width="24" height="24" viewBox="0 0 20 20"><path d="M3 10L5.5 6H13L17.5 3.5V6.5L14 10Z" fill="#7fd4a6"/><path d="M3 10V17H14V10M14 17L17.5 14V6.5 M3 10L5.5 6H13L14 10 M13 6L16 3.5H17.5" stroke="#e8e8e8" stroke-width="1.05" fill="none" stroke-linejoin="round"/></svg>
<svg style="left:11px;top:433.9px" width="24" height="24" viewBox="0 0 20 20"><path d="M3 6H14V17H3Z M3 6L6.5 2.5H17.5L14 6 M17.5 2.5V13.5L14 17" stroke="#e8e8e8" stroke-width="1.05" fill="none" stroke-linejoin="round"/><path d="M8.5 17V6L12 2.5" stroke="#7fd4a6" stroke-width="1.3" fill="none"/></svg>
<svg style="left:11px;top:462.4px" width="24" height="24" viewBox="0 0 20 20"><path d="M3 6H14V17H3Z M3 6L6.5 2.5H17.5L14 6 M17.5 2.5V13.5L14 17" stroke="#e8e8e8" stroke-width="1.05" fill="none" stroke-linejoin="round"/><path d="M11 3L5 7L9 17" stroke="#7fd4a6" stroke-width="1.3" fill="none"/><circle cx="11" cy="3" r="1.4" fill="#7fd4a6"/><circle cx="9" cy="17" r="1.4" fill="#7fd4a6"/></svg>
<svg style="left:11px;top:490.9px" width="24" height="24" viewBox="0 0 20 20"><path d="M3 14 L4 5 Q5 2.5 8 2.5 H15 L17 5 L16.5 15.5 H3.5Z" fill="#7fd4a6"/><circle cx="4" cy="5.5" r="1.4" fill="#fff"/><circle cx="15" cy="2.5" r="1.4" fill="#fff"/><circle cx="16.5" cy="15.5" r="1.4" fill="#fff"/><circle cx="3.5" cy="15.5" r="1.4" fill="#fff"/><circle cx="9" cy="1.8" r="1.2" fill="#fff"/></svg>
<svg style="left:11px;top:519.5px" width="24" height="24" viewBox="0 0 20 20"><path d="M10 10 L10 2 A8 8 0 1 0 17.5 13Z" fill="#7fd4a6"/><path d="M10 10L2.8 6.5M10 10L3 14.5M10 10L9 18M10 10L15 16.5" stroke="#282828" stroke-width="1"/><path d="M10 2 A8 8 0 0 1 17.5 13 L10 10Z" fill="none" stroke="#e8e8e8" stroke-width="1"/><path d="M10 10L16 5" stroke="#e8e8e8" stroke-width="1"/></svg>
<svg style="left:11px;top:548.0px" width="24" height="24" viewBox="0 0 20 20"><path d="M3 10 Q3 3.5 10 3.5 Q17 3.5 17 10 Q17 16.5 10 16.5 Q3 16.5 3 10Z" fill="#d6c0ea"/><path d="M3.5 9 Q10 7 16.5 9.5M9.5 3.5 Q7.5 10 9.5 16.5" stroke="#6f5f80" stroke-width="1" fill="none"/></svg>
<svg style="left:11px;top:576.5px" width="24" height="24" viewBox="0 0 20 20"><path d="M6 7H15.5V17H6Z M6 7L9 4H18.5L15.5 7 M18.5 4V14L15.5 17" stroke="#e8e8e8" stroke-width="1.05" fill="none" stroke-linejoin="round"/><path d="M3.5 9V17.5H6 M4 8.5L7 5.5" stroke="#e8e8e8" stroke-width="1" fill="none"/><path d="M1 3L4 1V5Z" fill="#d6c0ea"/></svg>
<svg style="left:11px;top:605.0px" width="24" height="24" viewBox="0 0 20 20"><rect x="5.5" y="5.5" width="9" height="9" fill="none" stroke="#e8e8e8" stroke-width="1.1"/><path d="M7 7L13 13M13 7L7 13" stroke="#e8e8e8" stroke-width="1.3"/><path d="M10 0.8L7.8 3.5H12.2ZM10 19.2L7.8 16.5H12.2ZM0.8 10L3.5 7.8V12.2ZM19.2 10L16.5 7.8V12.2Z" fill="#d6c0ea"/><path d="M3 3L5.5 5.5M17 3L14.5 5.5M3 17L5.5 14.5M17 17L14.5 14.5" stroke="#d6c0ea" stroke-width="1.6"/></svg>
<svg style="left:11px;top:633.5px" width="24" height="24" viewBox="0 0 20 20"><path d="M1.2 8 L11 5.8 L19.7 14.1 L15.2 16.9 L6.9 16.9Z" fill="#d6c0ea"/><path d="M11 7 L16.9 15.2 M11 5.8 L10.5 7.2 L1.2 8" stroke="#5a4a6a" stroke-width=".8" fill="none"/><path d="M15.5 1.2L18.5 2.9L15.5 4.6Z" fill="#d6c0ea"/></svg>
<svg style="left:11px;top:662.0px" width="24" height="24" viewBox="0 0 20 20"><path d="M4 8 L7.5 4 H15.5 L13 7" stroke="#e8e8e8" stroke-width="1.1" fill="none"/><path d="M13 3.5 H16.5 V7" stroke="#e8e8e8" stroke-width="1.1" fill="none"/></svg>
<svg style="left:33px;top:95.5px" width="4" height="4"><path d="M4 0V4H0Z" fill="#9a9a9a"/></svg>
<svg style="left:33px;top:214.2px" width="4" height="4"><path d="M4 0V4H0Z" fill="#9a9a9a"/></svg>
<svg style="left:33px;top:276.1px" width="4" height="4"><path d="M4 0V4H0Z" fill="#9a9a9a"/></svg>
<svg style="left:33px;top:336.9px" width="4" height="4"><path d="M4 0V4H0Z" fill="#9a9a9a"/></svg>
<svg style="left:33px;top:455.2px" width="4" height="4"><path d="M4 0V4H0Z" fill="#9a9a9a"/></svg>
<svg style="left:33px;top:483.7px" width="4" height="4"><path d="M4 0V4H0Z" fill="#9a9a9a"/></svg>
<svg style="left:33px;top:540.7px" width="4" height="4"><path d="M4 0V4H0Z" fill="#9a9a9a"/></svg>
<svg style="left:33px;top:569.2px" width="4" height="4"><path d="M4 0V4H0Z" fill="#9a9a9a"/></svg>
<svg style="left:33px;top:597.7px" width="4" height="4"><path d="M4 0V4H0Z" fill="#9a9a9a"/></svg>
<svg style="left:33px;top:626.2px" width="4" height="4"><path d="M4 0V4H0Z" fill="#9a9a9a"/></svg>
<svg style="left:33px;top:654.7px" width="4" height="4"><path d="M4 0V4H0Z" fill="#9a9a9a"/></svg>
</div>
<!-- /TOOLBAR -->
<!-- viewport text -->
<div class="t" style="left:54px;top:72px;color:#f0f0f0;text-shadow:0 0 2px #000">User Perspective</div>
<div class="t" style="left:54px;top:86px;color:#f0f0f0;text-shadow:0 0 2px #000">(32) Plane</div>

<!-- OUTLINER -->
<div id="ol" class="a" style="left:1058px;top:23px;width:222px;height:224px;background:#282828;border-radius:4px 0 0 4px;overflow:hidden"></div>

<!-- PROPERTIES -->
<div id="pr" class="a" style="left:1058px;top:249px;width:222px;height:474px;background:#2b2b2b;border-radius:5px 0 0 0;overflow:hidden"></div>

<!-- TIMELINE -->
<div id="tl" class="a" style="left:1px;top:672px;width:1055px;height:51px;background:#1d1d1d;border-radius:5px 5px 0 0;overflow:hidden"></div>

<!-- PANELS -->
<svg style="left:0;top:0" width="1280" height="723" viewBox="0 0 1280 723"><line x1="1014.6" y1="106.3" x2="1014.6" y2="89" stroke="#3090e8" stroke-width="1.5"/><line x1="1014.6" y1="106.3" x2="1000" y2="98.5" stroke="#6a9e28" stroke-width="1.5"/><line x1="1014.6" y1="106.3" x2="1029.5" y2="98.5" stroke="#c8394f" stroke-width="1.5"/><circle cx="995.3" cy="115.5" r="6.4" fill="#6e3f47" stroke="#d33a55" stroke-width="1.3"/><circle cx="1033.1" cy="115.8" r="6.4" fill="#55652f" stroke="#7ec82a" stroke-width="1.3"/><circle cx="1014.4" cy="128.6" r="6.4" fill="#3f4f63" stroke="#3877c0" stroke-width="1.3"/><circle cx="1014.6" cy="83.1" r="7" fill="#3090e8"/><circle cx="996" cy="96.2" r="6.6" fill="#6a9e28"/><circle cx="1033.6" cy="96.3" r="6.6" fill="#c8394f"/><text x="1014.6" y="86.6" font-size="9.5" font-weight="bold" text-anchor="middle" fill="#10233a" font-family="Liberation Sans">Z</text><text x="996" y="99.7" font-size="9.5" font-weight="bold" text-anchor="middle" fill="#1a2a08" font-family="Liberation Sans">Y</text><text x="1033.6" y="99.8" font-size="9.5" font-weight="bold" text-anchor="middle" fill="#3a0d15" font-family="Liberation Sans">X</text><circle cx="1036.9" cy="151.3" r="11.5" fill="#2e2e2e" fill-opacity="0.85"/><circle cx="1036.9" cy="176.3" r="11.5" fill="#2e2e2e" fill-opacity="0.85"/><circle cx="1036.9" cy="201.7" r="11.5" fill="#2e2e2e" fill-opacity="0.85"/><circle cx="1036.9" cy="226.1" r="11.5" fill="#2e2e2e" fill-opacity="0.85"/><circle cx="1038.5" cy="149.5" r="4.2" fill="#e8e8e8"/><path d="M1036.5 149.5h4M1038.5 147.5v4" stroke="#2e2e2e" stroke-width="1.1"/><path d="M1035.5 152.5L1031.5 156.5" stroke="#e8e8e8" stroke-width="1.6" stroke-linecap="round"/><path d="M1032 177 Q1031 174 1032.5 174.5 L1034 176 V170.5 Q1034 169.5 1035 169.5 Q1036 169.5 1036 170.5 V174 V169 Q1036 168 1037 168 Q1038 168 1038 169 V174 V169.5 Q1038 168.5 1039 168.5 Q1040 168.5 1040 169.5 V174.5 V171 Q1040 170 1041 170 Q1042 170 1042 171 V178 Q1042 182.5 1037.5 182.5 Q1034.5 182.5 1033 179.5Z" fill="#e8e8e8"/><circle cx="1034.5" cy="197.5" r="2.8" fill="#e8e8e8"/><circle cx="1039.5" cy="197" r="2.5" fill="#e8e8e8"/><rect x="1031.5" y="200" width="9" height="6" fill="#e8e8e8" rx="1"/><path d="M1040.5 203L1043.5 200.5V205.5Z" fill="#e8e8e8"/><circle cx="1034.5" cy="197.5" r="1" fill="#2e2e2e"/><circle cx="1039.5" cy="197" r="1" fill="#2e2e2e"/><path d="M1032.5 220.5H1041.5L1043 231.5H1031Z" fill="none" stroke="#e8e8e8" stroke-width="1.2"/><path d="M1031.8 224H1042.2M1031.4 227.8H1042.6M1035.5 220.5L1035 231.5M1038.5 220.5L1039 231.5" stroke="#e8e8e8" stroke-width="1.1"/></svg>
<div class="a" style="left:1050px;top:78px;width:7px;height:10px;background:#353535;border-radius:3px;"></div>
<svg style="left:1051px;top:79px" width="6" height="8" viewBox="0 0 6 8"><path d="M4.5 0.8L1.5 4L4.5 7.2" stroke="#a8a8a8" stroke-width="1.1" fill="none"/></svg>
<div class="a" style="left:1065px;top:25px;width:26px;height:16px;background:#282828;border-radius:4px;border:1px solid #2f2f2f"></div>
<div class="a" style="left:1095px;top:25px;width:27px;height:16px;background:#282828;border-radius:4px;border:1px solid #2f2f2f"></div>
<div class="a" style="left:1243px;top:25px;width:27px;height:16px;background:#282828;border-radius:4px;border:1px solid #2f2f2f"></div>
<div class="a" style="left:1135px;top:25px;width:96px;height:16px;background:#1d1d1d;border-radius:4px;"></div>
<div class="a" style="left:1275px;top:25px;width:8px;height:16px;background:#474747;border-radius:4px;"></div>
<svg style="left:1068px;top:27px" width="22" height="13" viewBox="0 0 22 13"><rect x="1" y="0.5" width="5" height="3" fill="#e0e0e0" rx=".5"/><rect x="5" y="5" width="6" height="3" fill="#e0e0e0" rx=".5"/><rect x="5" y="9.5" width="6" height="3" fill="#e0e0e0" rx=".5"/><path d="M2.5 3.5V11H5M2.5 6.5H5" stroke="#bdbdbd" stroke-width=".9" fill="none"/><g transform="translate(13,4)"><path d="M0.5 0.8l3 3 3-3" stroke="#d0d0d0" stroke-width="1.1" fill="none"/></g></svg>
<svg style="left:1098px;top:26px" width="24" height="14" viewBox="0 0 24 14"><rect x="1" y="4" width="9" height="9" fill="#555" stroke="#999" stroke-width=".6"/><rect x="2.5" y="2.5" width="9" height="9" fill="#777" stroke="#aaa" stroke-width=".6"/><rect x="4" y="1" width="9" height="9" fill="#d8d8d8"/><path d="M5 9L8 4.5L10 7.5L11 6.5L12.5 9Z" fill="#666"/><g transform="translate(15,5)"><path d="M0.5 0.8l3 3 3-3" stroke="#d0d0d0" stroke-width="1.1" fill="none"/></g></svg>
<svg style="left:1138px;top:27px" width="14" height="13" viewBox="0 0 14 13"><circle cx="8.3" cy="5" r="3.8" fill="none" stroke="#e0e0e0" stroke-width="1.2"/><path d="M5.5 7.8L1.5 11.8" stroke="#e0e0e0" stroke-width="1.4" stroke-linecap="round"/></svg>
<svg style="left:1246px;top:26px" width="24" height="14" viewBox="0 0 24 14"><path d="M1 1.5H11L7.2 6.5V12L4.8 10.5V6.5Z" fill="none" stroke="#e0e0e0" stroke-width="1.1" stroke-linejoin="round"/><g transform="translate(15,5)"><path d="M0.5 0.8l3 3 3-3" stroke="#d0d0d0" stroke-width="1.1" fill="none"/></g></svg>
<div class="a" style="left:1058px;top:61.4px;width:222px;height:16.6px;background:#2b2b2b;border-radius:0px;"></div>
<div class="a" style="left:1058px;top:127.8px;width:222px;height:16.6px;background:#2b2b2b;border-radius:0px;"></div>
<div class="a" style="left:1058px;top:161.00000000000003px;width:222px;height:16.6px;background:#2b2b2b;border-radius:0px;"></div>
<div class="a" style="left:1058px;top:194.20000000000002px;width:222px;height:16.6px;background:#2b2b2b;border-radius:0px;"></div>
<div class="a" style="left:1058px;top:227.40000000000003px;width:222px;height:16.6px;background:#2b2b2b;border-radius:0px;"></div>
<div class="a" style="left:1058px;top:77.4px;width:222px;height:16.6px;background:#213a5d;border-radius:0px;"></div>
<div class="a" style="left:1058px;top:94px;width:222px;height:16.6px;background:#334d80;border-radius:0px;"></div>
<svg style="left:1077px;top:47.5px" width="12" height="11" viewBox="0 0 12 11"><rect x="0" y="0" width="12" height="3.2" fill="#e0e0e0"/><path d="M1 4H11V11H1ZM4.5 5.5V6.5H7.5V5.5Z" fill="#e0e0e0" fill-rule="evenodd"/></svg>
<div class="t" style="left:1095px;top:47px;color:#d8d8d8;">Scene Collection</div>
<svg style="left:1080px;top:66px" width="7" height="6" viewBox="0 0 7 6"><path d="M0.5 0.5H6.5L3.5 5.5Z" fill="#c8c8c8"/></svg>
<div class="a" style="left:1092px;top:61.5px;width:16px;height:16px;background:#4a4a4a;border-radius:4px;"></div>
<svg style="left:1094px;top:64px" width="12" height="11" viewBox="0 0 12 11"><rect x="0" y="0" width="12" height="3.2" fill="#e0e0e0"/><path d="M1 4H11V11H1ZM4.5 5.5V6.5H7.5V5.5Z" fill="#e0e0e0" fill-rule="evenodd"/></svg>
<div class="t" style="left:1112px;top:64px;color:#d8d8d8;">Collection</div>
<svg style="left:1080px;top:116px" width="7" height="6" viewBox="0 0 7 6"><path d="M0.5 0.5H6.5L3.5 5.5Z" fill="#c8c8c8"/></svg>
<svg style="left:1094px;top:114px" width="12" height="11" viewBox="0 0 12 11"><rect x="0" y="0" width="12" height="3.2" fill="#e0e0e0"/><path d="M1 4H11V11H1ZM4.5 5.5V6.5H7.5V5.5Z" fill="#e0e0e0" fill-rule="evenodd"/></svg>
<div class="t" style="left:1112px;top:114px;color:#d8d8d8;">Reference</div>
<div class="a" style="left:1082px;top:82px;width:1px;height:24px;background:#5a5a5a;border-radius:0px;"></div>
<div class="a" style="left:1082px;top:128px;width:1px;height:78px;background:#4a4a4a;border-radius:0px;"></div>
<svg style="left:1060px;top:80px" width="12" height="12" viewBox="0 0 12 12"><rect x="1.5" y="2.5" width="8" height="8" fill="none" stroke="#bfbfbf" stroke-width=".8"/><circle cx="1.8" cy="2.8" r="1.2" fill="#222" stroke="#bfbfbf" stroke-width=".7"/><circle cx="1.8" cy="10.2" r="1.2" fill="#222" stroke="#bfbfbf" stroke-width=".7"/><circle cx="9.5" cy="10.2" r="1.2" fill="#222" stroke="#bfbfbf" stroke-width=".7"/><rect x="8" y="0" width="3.8" height="3.8" fill="#f0f0f0"/></svg>
<svg style="left:1060px;top:97px" width="12" height="12" viewBox="0 0 12 12"><rect x="1.5" y="2.5" width="8" height="8" fill="none" stroke="#bfbfbf" stroke-width=".8"/><circle cx="1.8" cy="2.8" r="1.2" fill="#222" stroke="#bfbfbf" stroke-width=".7"/><circle cx="1.8" cy="10.2" r="1.2" fill="#222" stroke="#bfbfbf" stroke-width=".7"/><circle cx="9.5" cy="10.2" r="1.2" fill="#222" stroke="#bfbfbf" stroke-width=".7"/><rect x="8" y="0" width="3.8" height="3.8" fill="#f0f0f0"/></svg>
<svg style="left:1097px;top:83.5px" width="6" height="7" viewBox="0 0 6 7"><path d="M0.5 0.5V6.5L5.5 3.5Z" fill="#c0c0c0"/></svg>
<svg style="left:1097px;top:100.1px" width="6" height="7" viewBox="0 0 6 7"><path d="M0.5 0.5V6.5L5.5 3.5Z" fill="#c0c0c0"/></svg>
<svg style="left:1097px;top:133px" width="6" height="7" viewBox="0 0 6 7"><path d="M0.5 0.5V6.5L5.5 3.5Z" fill="#c0c0c0"/></svg>
<svg style="left:1097px;top:149.6px" width="6" height="7" viewBox="0 0 6 7"><path d="M0.5 0.5V6.5L5.5 3.5Z" fill="#c0c0c0"/></svg>
<svg style="left:1097px;top:166.2px" width="6" height="7" viewBox="0 0 6 7"><path d="M0.5 0.5V6.5L5.5 3.5Z" fill="#c0c0c0"/></svg>
<svg style="left:1097px;top:182.8px" width="6" height="7" viewBox="0 0 6 7"><path d="M0.5 0.5V6.5L5.5 3.5Z" fill="#c0c0c0"/></svg>
<svg style="left:1097px;top:199.4px" width="6" height="7" viewBox="0 0 6 7"><path d="M0.5 0.5V6.5L5.5 3.5Z" fill="#c0c0c0"/></svg>
<div class="a" style="left:1108.5px;top:95.5px;width:16px;height:14px;background:#5a6a8a;border-radius:4px;opacity:.7"></div>
<svg style="left:1110px;top:80px" width="12" height="12" viewBox="0 0 12 12"><path d="M1.5 1.5H10.5L6 10.5Z" fill="none" stroke="#e8913a" stroke-width="1.8" stroke-linejoin="round"/></svg>
<svg style="left:1110px;top:97px" width="12" height="12" viewBox="0 0 12 12"><path d="M1.5 1.5H10.5L6 10.5Z" fill="none" stroke="#e8913a" stroke-width="1.8" stroke-linejoin="round"/></svg>
<div class="t" style="left:1128px;top:80px;color:#e88a3c;">Main</div>
<div class="t" style="left:1128px;top:97px;color:#f4b24a;">Plane</div>
<svg style="left:1168px;top:80px" width="12" height="12" viewBox="0 0 12 12"><path d="M2 10.5L6.5 6 Q5.5 3 7.5 1.8 Q9 1 10.5 1.5 L8.5 3.5 L9 4.5 L10.5 5 L11.2 3.2 Q11.5 5.5 10 6.5 Q8.5 7.5 6.5 6.5" stroke="#5c8fd6" stroke-width="1.3" fill="none" stroke-linecap="round"/></svg>
<div class="a" style="left:1182px;top:78.5px;width:16px;height:15px;background:#245458;border-radius:4px;opacity:.9"></div>
<svg style="left:1184px;top:80.5px" width="12" height="11" viewBox="0 0 12 11"><path d="M1.5 1.5H10.5L6 9.5Z" fill="none" stroke="#2fc2b0" stroke-width="1"/><circle cx="1.5" cy="1.5" r="1.2" fill="#245458" stroke="#2fc2b0" stroke-width=".9"/><circle cx="10.5" cy="1.5" r="1.2" fill="#245458" stroke="#2fc2b0" stroke-width=".9"/><circle cx="6" cy="9.5" r="1.2" fill="#245458" stroke="#2fc2b0" stroke-width=".9"/></svg>
<div class="a" style="left:1170px;top:95px;width:16px;height:15px;background:#245458;border-radius:4px;opacity:.9"></div>
<svg style="left:1172px;top:97px" width="12" height="11" viewBox="0 0 12 11"><path d="M1.5 1.5H10.5L6 9.5Z" fill="none" stroke="#2fc2b0" stroke-width="1"/><circle cx="1.5" cy="1.5" r="1.2" fill="#245458" stroke="#2fc2b0" stroke-width=".9"/><circle cx="10.5" cy="1.5" r="1.2" fill="#245458" stroke="#2fc2b0" stroke-width=".9"/><circle cx="6" cy="9.5" r="1.2" fill="#245458" stroke="#2fc2b0" stroke-width=".9"/></svg>
<svg style="left:1110px;top:130.8px" width="12" height="12" viewBox="0 0 12 12"><rect x="0" y="0" width="12" height="12" rx="1" fill="#e0893a"/><path d="M2.5 10L6 3.5L9.5 10Z" fill="#222"/></svg>
<div class="t" style="left:1128px;top:130.8px;color:#d8d8d8;">Bottom</div>
<svg style="left:1178px;top:130.3px" width="12" height="12" viewBox="0 0 12 12"><rect x="0.5" y="0.5" width="11" height="11" fill="none" stroke="#c85860" stroke-width="1"/><path d="M2 11L5.5 5L9 11Z" fill="#d0606a"/><circle cx="8.5" cy="3.5" r="1.1" fill="#d0606a"/></svg>
<svg style="left:1110px;top:147.4px" width="12" height="12" viewBox="0 0 12 12"><rect x="0" y="0" width="12" height="12" rx="1" fill="#e0893a"/><path d="M2.5 10L6 3.5L9.5 10Z" fill="#222"/></svg>
<div class="t" style="left:1128px;top:147.4px;color:#d8d8d8;">Front</div>
<svg style="left:1169.5px;top:146.9px" width="12" height="12" viewBox="0 0 12 12"><rect x="0.5" y="0.5" width="11" height="11" fill="none" stroke="#c85860" stroke-width="1"/><path d="M2 11L5.5 5L9 11Z" fill="#d0606a"/><circle cx="8.5" cy="3.5" r="1.1" fill="#d0606a"/></svg>
<svg style="left:1110px;top:164.0px" width="12" height="12" viewBox="0 0 12 12"><rect x="0" y="0" width="12" height="12" rx="1" fill="#e0893a"/><path d="M2.5 10L6 3.5L9.5 10Z" fill="#222"/></svg>
<div class="t" style="left:1128px;top:164.0px;color:#d8d8d8;">Left</div>
<svg style="left:1164px;top:163.5px" width="12" height="12" viewBox="0 0 12 12"><rect x="0.5" y="0.5" width="11" height="11" fill="none" stroke="#c85860" stroke-width="1"/><path d="M2 11L5.5 5L9 11Z" fill="#d0606a"/><circle cx="8.5" cy="3.5" r="1.1" fill="#d0606a"/></svg>
<svg style="left:1110px;top:180.60000000000002px" width="12" height="12" viewBox="0 0 12 12"><rect x="0" y="0" width="12" height="12" rx="1" fill="#e0893a"/><path d="M2.5 10L6 3.5L9.5 10Z" fill="#222"/></svg>
<div class="t" style="left:1128px;top:180.60000000000002px;color:#d8d8d8;">Right</div>
<svg style="left:1165.5px;top:180.10000000000002px" width="12" height="12" viewBox="0 0 12 12"><rect x="0.5" y="0.5" width="11" height="11" fill="none" stroke="#c85860" stroke-width="1"/><path d="M2 11L5.5 5L9 11Z" fill="#d0606a"/><circle cx="8.5" cy="3.5" r="1.1" fill="#d0606a"/></svg>
<svg style="left:1110px;top:197.20000000000002px" width="12" height="12" viewBox="0 0 12 12"><rect x="0" y="0" width="12" height="12" rx="1" fill="#e0893a"/><path d="M2.5 10L6 3.5L9.5 10Z" fill="#222"/></svg>
<div class="t" style="left:1128px;top:197.20000000000002px;color:#d8d8d8;">Top</div>
<svg style="left:1163.5px;top:196.70000000000002px" width="12" height="12" viewBox="0 0 12 12"><rect x="0.5" y="0.5" width="11" height="11" fill="none" stroke="#c85860" stroke-width="1"/><path d="M2 11L5.5 5L9 11Z" fill="#d0606a"/><circle cx="8.5" cy="3.5" r="1.1" fill="#d0606a"/></svg>
<svg style="left:1210px;top:64.9px" width="10" height="10" viewBox="0 0 10 10"><rect x="0" y="0" width="10" height="10" rx="1.5" fill="#e8e8e8"/><path d="M2 5L4.2 7.2L8 2.8" stroke="#222" stroke-width="1.4" fill="none"/></svg>
<svg style="left:1227px;top:64.4px" width="11" height="11" viewBox="0 0 11 11"><path d="M1 1L10 4L6 5.5L4.5 10Z" fill="#f0f0f0"/></svg>
<svg style="left:1241px;top:64.9px" width="13" height="10" viewBox="0 0 13 10"><path d="M1 5 Q6.5 -1 12 5 Q6.5 11 1 5Z" fill="none" stroke="#e8e8e8" stroke-width="1.3"/><circle cx="6.5" cy="5" r="2.1" fill="#e8e8e8"/></svg>
<svg style="left:1258px;top:64.4px" width="12" height="11" viewBox="0 0 12 11"><path d="M0.5 3H3L4 1H8L9 3H11.5V10.5H0.5Z" fill="#e8e8e8"/><circle cx="6" cy="6.5" r="2.5" fill="#555"/><circle cx="6" cy="6.5" r="1.5" fill="#e8e8e8"/></svg>
<svg style="left:1227px;top:81.0px" width="11" height="11" viewBox="0 0 11 11"><path d="M1 1L10 4L6 5.5L4.5 10Z" fill="#f0f0f0"/></svg>
<svg style="left:1241px;top:81.5px" width="13" height="10" viewBox="0 0 13 10"><path d="M1 5 Q6.5 -1 12 5 Q6.5 11 1 5Z" fill="none" stroke="#e8e8e8" stroke-width="1.3"/><circle cx="6.5" cy="5" r="2.1" fill="#e8e8e8"/></svg>
<svg style="left:1258px;top:81.0px" width="12" height="11" viewBox="0 0 12 11"><path d="M0.5 3H3L4 1H8L9 3H11.5V10.5H0.5Z" fill="#e8e8e8"/><circle cx="6" cy="6.5" r="2.5" fill="#555"/><circle cx="6" cy="6.5" r="1.5" fill="#e8e8e8"/></svg>
<svg style="left:1227px;top:97.60000000000001px" width="11" height="11" viewBox="0 0 11 11"><path d="M1 1L10 4L6 5.5L4.5 10Z" fill="#f0f0f0"/></svg>
<svg style="left:1241px;top:98.10000000000001px" width="13" height="10" viewBox="0 0 13 10"><path d="M1 5 Q6.5 -1 12 5 Q6.5 11 1 5Z" fill="none" stroke="#e8e8e8" stroke-width="1.3"/><circle cx="6.5" cy="5" r="2.1" fill="#e8e8e8"/></svg>
<svg style="left:1258px;top:97.60000000000001px" width="12" height="11" viewBox="0 0 12 11"><path d="M0.5 3H3L4 1H8L9 3H11.5V10.5H0.5Z" fill="#e8e8e8"/><circle cx="6" cy="6.5" r="2.5" fill="#555"/><circle cx="6" cy="6.5" r="1.5" fill="#e8e8e8"/></svg>
<svg style="left:1210px;top:114.7px" width="10" height="10" viewBox="0 0 10 10"><rect x="0" y="0" width="10" height="10" rx="1.5" fill="#e8e8e8"/><path d="M2 5L4.2 7.2L8 2.8" stroke="#222" stroke-width="1.4" fill="none"/></svg>
<svg style="left:1227px;top:114.2px" width="11" height="11" viewBox="0 0 11 11"><path d="M1 1L10 4L6 5.5L4.5 10Z" fill="none" stroke="#6a6a6a" stroke-width=".9"/></svg>
<svg style="left:1241px;top:114.7px" width="13" height="10" viewBox="0 0 13 10"><path d="M1 5 Q6.5 -1 12 5 Q6.5 11 1 5Z" fill="none" stroke="#e8e8e8" stroke-width="1.3"/><circle cx="6.5" cy="5" r="2.1" fill="#e8e8e8"/></svg>
<svg style="left:1258px;top:114.2px" width="12" height="11" viewBox="0 0 12 11"><path d="M0.5 3H3L4 1H8L9 3H11.5V10.5H0.5Z" fill="#e8e8e8"/><circle cx="6" cy="6.5" r="2.5" fill="#555"/><circle cx="6" cy="6.5" r="1.5" fill="#e8e8e8"/></svg>
<svg style="left:1227px;top:130.8px" width="11" height="11" viewBox="0 0 11 11"><path d="M1 1L10 4L6 5.5L4.5 10Z" fill="#808080"/></svg>
<svg style="left:1241px;top:131.3px" width="13" height="10" viewBox="0 0 13 10"><path d="M1 5 Q6.5 -1 12 5 Q6.5 11 1 5Z" fill="none" stroke="#e8e8e8" stroke-width="1.3"/><circle cx="6.5" cy="5" r="2.1" fill="#e8e8e8"/></svg>
<svg style="left:1258px;top:130.8px" width="12" height="11" viewBox="0 0 12 11"><path d="M0.5 3H3L4 1H8L9 3H11.5V10.5H0.5Z" fill="#e8e8e8"/><circle cx="6" cy="6.5" r="2.5" fill="#555"/><circle cx="6" cy="6.5" r="1.5" fill="#e8e8e8"/></svg>
<svg style="left:1227px;top:147.40000000000003px" width="11" height="11" viewBox="0 0 11 11"><path d="M1 1L10 4L6 5.5L4.5 10Z" fill="#808080"/></svg>
<svg style="left:1241px;top:147.90000000000003px" width="13" height="10" viewBox="0 0 13 10"><path d="M1 5 Q6.5 -1 12 5 Q6.5 11 1 5Z" fill="none" stroke="#e8e8e8" stroke-width="1.3"/><circle cx="6.5" cy="5" r="2.1" fill="#e8e8e8"/></svg>
<svg style="left:1258px;top:147.40000000000003px" width="12" height="11" viewBox="0 0 12 11"><path d="M0.5 3H3L4 1H8L9 3H11.5V10.5H0.5Z" fill="#e8e8e8"/><circle cx="6" cy="6.5" r="2.5" fill="#555"/><circle cx="6" cy="6.5" r="1.5" fill="#e8e8e8"/></svg>
<svg style="left:1227px;top:164.00000000000003px" width="11" height="11" viewBox="0 0 11 11"><path d="M1 1L10 4L6 5.5L4.5 10Z" fill="#808080"/></svg>
<svg style="left:1241px;top:164.50000000000003px" width="13" height="10" viewBox="0 0 13 10"><path d="M1 5 Q6.5 -1 12 5 Q6.5 11 1 5Z" fill="none" stroke="#e8e8e8" stroke-width="1.3"/><circle cx="6.5" cy="5" r="2.1" fill="#e8e8e8"/></svg>
<svg style="left:1258px;top:164.00000000000003px" width="12" height="11" viewBox="0 0 12 11"><path d="M0.5 3H3L4 1H8L9 3H11.5V10.5H0.5Z" fill="#e8e8e8"/><circle cx="6" cy="6.5" r="2.5" fill="#555"/><circle cx="6" cy="6.5" r="1.5" fill="#e8e8e8"/></svg>
<svg style="left:1227px;top:180.60000000000002px" width="11" height="11" viewBox="0 0 11 11"><path d="M1 1L10 4L6 5.5L4.5 10Z" fill="#808080"/></svg>
<svg style="left:1241px;top:181.10000000000002px" width="13" height="10" viewBox="0 0 13 10"><path d="M1 5 Q6.5 -1 12 5 Q6.5 11 1 5Z" fill="none" stroke="#e8e8e8" stroke-width="1.3"/><circle cx="6.5" cy="5" r="2.1" fill="#e8e8e8"/></svg>
<svg style="left:1258px;top:180.60000000000002px" width="12" height="11" viewBox="0 0 12 11"><path d="M0.5 3H3L4 1H8L9 3H11.5V10.5H0.5Z" fill="#e8e8e8"/><circle cx="6" cy="6.5" r="2.5" fill="#555"/><circle cx="6" cy="6.5" r="1.5" fill="#e8e8e8"/></svg>
<svg style="left:1227px;top:197.20000000000002px" width="11" height="11" viewBox="0 0 11 11"><path d="M1 1L10 4L6 5.5L4.5 10Z" fill="#808080"/></svg>
<svg style="left:1241px;top:197.70000000000002px" width="13" height="10" viewBox="0 0 13 10"><path d="M1 5 Q6.5 -1 12 5 Q6.5 11 1 5Z" fill="none" stroke="#e8e8e8" stroke-width="1.3"/><circle cx="6.5" cy="5" r="2.1" fill="#e8e8e8"/></svg>
<svg style="left:1258px;top:197.20000000000002px" width="12" height="11" viewBox="0 0 12 11"><path d="M0.5 3H3L4 1H8L9 3H11.5V10.5H0.5Z" fill="#e8e8e8"/><circle cx="6" cy="6.5" r="2.5" fill="#555"/><circle cx="6" cy="6.5" r="1.5" fill="#e8e8e8"/></svg>
<div class="a" style="left:1058px;top:249px;width:222px;height:21px;background:#303030;border-radius:5px;border-radius:5px 0 0 0"></div>
<div class="a" style="left:1058px;top:270px;width:23px;height:453px;background:#1d1d1d;border-radius:0px;"></div>
<div class="a" style="left:1066px;top:252px;width:25px;height:15px;background:#282828;border-radius:4px;"></div>
<svg style="left:1069px;top:254px" width="22" height="12" viewBox="0 0 22 12"><rect x="0" y="0.5" width="9" height="4.5" rx="2.25" fill="#e0e0e0"/><rect x="0" y="6.5" width="9" height="4.5" rx="2.25" fill="#e0e0e0"/><rect x="5" y="1.5" width="3" height="2.5" rx="1" fill="#1d1d1d"/><rect x="6" y="7.5" width="2" height="2.5" rx="1" fill="#1d1d1d"/><g transform="translate(14,4)"><path d="M0.5 0.8l3 3 3-3" stroke="#d0d0d0" stroke-width="1.1" fill="none"/></g></svg>
<div class="a" style="left:1118px;top:252px;width:94px;height:15px;background:#1d1d1d;border-radius:4px;"></div>
<svg style="left:1121px;top:253px" width="13" height="13" viewBox="0 0 13 13"><circle cx="7.5" cy="5" r="3.6" fill="none" stroke="#e0e0e0" stroke-width="1.1"/><path d="M5 7.5L1.5 11" stroke="#e0e0e0" stroke-width="1.3" stroke-linecap="round"/></svg>
<div class="a" style="left:1258px;top:252px;width:15px;height:15px;background:#282828;border-radius:4px;"></div>
<svg style="left:1262px;top:257px" width="7" height="5" viewBox="0 0 7 5"><path d="M0.5 0.8l3 3 3-3" stroke="#d0d0d0" stroke-width="1.1" fill="none"/></svg>
<div class="a" style="left:1058px;top:458.3px;width:23px;height:21.2px;background:#303030;border-radius:4px;border-radius:4px 0 0 4px"></div>
<svg style="left:1063px;top:280px" width="14" height="14" viewBox="0 0 14 14"><path d="M3 1V6M2 6.5H4V9H2Z" stroke="#cfcfcf" stroke-width="1.1" fill="#cfcfcf"/><circle cx="3" cy="10.5" r="2" fill="#cfcfcf"/><path d="M8 1V4Q8 6 10 6Q12 6 12 4V1M10 6V13" stroke="#cfcfcf" stroke-width="1.6" fill="none"/></svg>
<svg style="left:1063px;top:308.6px" width="14" height="14" viewBox="0 0 14 14"><rect x="1" y="4" width="12" height="9" rx="1" fill="none" stroke="#cfcfcf" stroke-width="1.1"/><path d="M4 4L5.5 1.5H8.5L10 4" stroke="#cfcfcf" stroke-width="1" fill="none"/><rect x="3" y="7" width="8" height="3.5" fill="#777"/></svg>
<svg style="left:1063px;top:332.3px" width="14" height="14" viewBox="0 0 14 14"><rect x="1" y="1" width="12" height="3.5" fill="#cfcfcf"/><rect x="1" y="5.5" width="12" height="4" fill="#cfcfcf"/><rect x="3.5" y="8" width="7" height="5" fill="#777" stroke="#cfcfcf" stroke-width=".8"/></svg>
<svg style="left:1063px;top:356px" width="14" height="14" viewBox="0 0 14 14"><rect x="1" y="5" width="8" height="8" fill="#666"/><rect x="3" y="3" width="8" height="8" fill="#999"/><rect x="5" y="1" width="8" height="8" fill="#cfcfcf"/><path d="M6 8L8.5 4L10.5 6.5L12 8Z" fill="#555"/></svg>
<svg style="left:1063px;top:379px" width="14" height="14" viewBox="0 0 14 14"><path d="M4 1L7.5 9H0.5Z" fill="#cfcfcf"/><circle cx="9.5" cy="9.5" r="3.2" fill="#555" stroke="#cfcfcf" stroke-width="1.1"/><circle cx="11" cy="2.5" r="1.8" fill="#cfcfcf"/></svg>
<svg style="left:1063px;top:402.8px" width="14" height="14" viewBox="0 0 14 14"><circle cx="7" cy="7" r="5.5" fill="none" stroke="#c04850" stroke-width="1.4"/><path d="M3 4Q6 6 4.5 9Q7 11 9 8Q12 6 9.5 3" stroke="#c04850" stroke-width="1.5" fill="none"/></svg>
<svg style="left:1063px;top:432.6px" width="14" height="14" viewBox="0 0 14 14"><rect x="1" y="1" width="12" height="3.3" fill="#cfcfcf"/><path d="M2 5.3H12V13H2Z" fill="none" stroke="#cfcfcf" stroke-width="1.2"/><rect x="5" y="6.5" width="4" height="1.3" fill="#cfcfcf"/></svg>
<svg style="left:1063px;top:462px" width="14" height="14" viewBox="0 0 14 14"><rect x="3.5" y="3.5" width="7" height="7" fill="#e8913a"/><path d="M1 4V1H4M10 1H13V4M13 10V13H10M4 13H1V10" stroke="#e8913a" stroke-width="1.1" fill="none"/></svg>
<svg style="left:1063px;top:486.2px" width="14" height="14" viewBox="0 0 14 14"><path d="M1.5 12.5L7 7 Q6 3.5 8.5 2 Q10.5 1 12.5 1.8 L10 4.3 L10.6 5.6 L12 6 L13 3.8 Q13.3 6.5 11.5 7.8 Q9.5 9 7.5 7.8" stroke="#5c8fd6" stroke-width="1.8" fill="none" stroke-linecap="round"/></svg>
<svg style="left:1063px;top:508.5px" width="14" height="14" viewBox="0 0 14 14"><path d="M3 2L3 12M3 12L11 12M3 12L10 5" stroke="#5c8fd6" stroke-width="1.2"/><circle cx="3" cy="2.5" r="1.8" fill="#5c8fd6"/><circle cx="11" cy="12" r="1.8" fill="#5c8fd6"/><circle cx="10" cy="5" r="1.8" fill="#5c8fd6"/><circle cx="3" cy="12" r="1.8" fill="#5c8fd6"/></svg>
<svg style="left:1063px;top:532px" width="14" height="14" viewBox="0 0 14 14"><circle cx="7" cy="7" r="5.5" fill="none" stroke="#5c8fd6" stroke-width="1.4"/><circle cx="7" cy="7" r="2.2" fill="#5c8fd6"/></svg>
<svg style="left:1063px;top:555.8px" width="14" height="14" viewBox="0 0 14 14"><ellipse cx="7" cy="7.5" rx="6" ry="4.5" fill="none" stroke="#5c8fd6" stroke-width="1.4" transform="rotate(-25 7 7)"/><circle cx="6.5" cy="7.5" r="2.2" fill="#5c8fd6"/></svg>
<svg style="left:1063px;top:578.6px" width="14" height="14" viewBox="0 0 14 14"><path d="M2 2H12L7 12Z" fill="none" stroke="#2fc2a0" stroke-width="1.3"/><circle cx="2" cy="2" r="1.6" fill="#2fc2a0"/><circle cx="12" cy="2" r="1.6" fill="#2fc2a0"/><circle cx="7" cy="12" r="1.6" fill="#2fc2a0"/></svg>
<svg style="left:1063px;top:601.4px" width="14" height="14" viewBox="0 0 14 14"><circle cx="7" cy="7" r="6" fill="#c04850"/><path d="M7 1A6 6 0 0 1 13 7H7Z" fill="#e0e0e0"/><path d="M7 7H1A6 6 0 0 0 7 13Z" fill="#1d1d1d" fill-opacity=".5"/></svg>
<svg style="left:1090px;top:278px" width="13" height="13" viewBox="0 0 13 13"><rect x="3.5" y="3.5" width="6" height="6" fill="#e8e8e8"/><path d="M1 4V1H4M9 1H12V4M12 9V12H9M4 12H1V9" stroke="#bbb" stroke-width="1" fill="none"/></svg>
<div class="t" style="left:1109px;top:277.4px;color:#e0e0e0;">Plane</div>
<svg style="left:1260px;top:278px" width="12" height="12" viewBox="0 0 12 12"><path d="M6 1L11 6L9.5 6.5L7.5 8.5L7.5 10L2 4.5L3.5 4.5L5.5 2.5Z" fill="none" stroke="#aaa" stroke-width="1"/><path d="M4 8L1 11" stroke="#aaa" stroke-width="1"/></svg>
<div class="a" style="left:1089px;top:307px;width:184px;height:15px;background:#1d1d1d;border-radius:4px;"></div>
<div class="a" style="left:1089px;top:307px;width:26px;height:15px;background:#282828;border-radius:4px;border-radius:4px 0 0 4px"></div>
<svg style="left:1092px;top:308px" width="22" height="13" viewBox="0 0 22 13"><rect x="3.5" y="3.5" width="6" height="6" fill="#e8e8e8"/><path d="M1 4V1H4M9 1H12V4M12 9V12H9M4 12H1V9" stroke="#bbb" stroke-width="1" fill="none"/><g transform="translate(14,5)"><path d="M0.5 0.8l3 3 3-3" stroke="#d0d0d0" stroke-width="1.1" fill="none"/></g></svg>
<div class="t" style="left:1120px;top:307.6px;color:#e8e8e8;">Plane</div>
<div class="a" style="left:1275.5px;top:280px;width:2.5px;height:420px;background:#3a3a3a;border-radius:2px;"></div>
<div class="a" style="left:1088px;top:331px;width:186px;height:232.5px;background:#3d3d3d;border-radius:4px;"></div>
<svg style="left:1094px;top:338px" width="9" height="6" viewBox="0 0 9 6"><path d="M0.8 0.8L4.5 4.5L8.2 0.8" stroke="#d0d0d0" stroke-width="1.1" fill="none"/></svg>
<div class="t" style="left:1106px;top:334.8px;color:#e8e8e8;">Transform</div>
<svg style="left:1258px;top:339px" width="11" height="5" viewBox="0 0 11 5"><rect x="0.0" y="0.0" width="1.3" height="1.3" fill="#8a8a8a"/><rect x="0.0" y="2.7" width="1.3" height="1.3" fill="#8a8a8a"/><rect x="2.7" y="0.0" width="1.3" height="1.3" fill="#8a8a8a"/><rect x="2.7" y="2.7" width="1.3" height="1.3" fill="#8a8a8a"/><rect x="5.4" y="0.0" width="1.3" height="1.3" fill="#8a8a8a"/><rect x="5.4" y="2.7" width="1.3" height="1.3" fill="#8a8a8a"/><rect x="8.100000000000001" y="0.0" width="1.3" height="1.3" fill="#8a8a8a"/><rect x="8.100000000000001" y="2.7" width="1.3" height="1.3" fill="#8a8a8a"/></svg>
<div class="a" style="left:1161px;top:359px;width:72px;height:48.599999999999994px;background:#545454;border-radius:4px;"></div>
<div class="a" style="left:1161px;top:375.2px;width:72px;height:1px;background:#3d3d3d;border-radius:0px;"></div>
<div class="a" style="left:1161px;top:391.4px;width:72px;height:1px;background:#3d3d3d;border-radius:0px;"></div>
<div class="t" style="left:1161px;top:360.4px;width:72px;text-align:center;color:#e8e8e8">3.679 cm</div>
<div class="t" style="left:1161px;top:376.59999999999997px;width:72px;text-align:center;color:#e8e8e8">2.2645 cm</div>
<div class="t" style="left:1161px;top:392.79999999999995px;width:72px;text-align:center;color:#e8e8e8">0 cm</div>
<div class="t" style="left:1060px;top:360.4px;width:93px;text-align:right;color:#d8d8d8">Location X</div>
<div class="t" style="left:1060px;top:376.59999999999997px;width:93px;text-align:right;color:#d8d8d8">Y</div>
<div class="t" style="left:1060px;top:392.79999999999995px;width:93px;text-align:right;color:#d8d8d8">Z</div>
<svg style="left:1236px;top:362.0px" width="13" height="11" viewBox="0 0 13 11"><path d="M1.5 5V3.5Q1.5 1 4 1Q6.5 1 6.5 3.5" stroke="#c8c8c8" stroke-width="1" fill="none"/><rect x="4.5" y="5.5" width="8" height="5" rx=".8" fill="none" stroke="#c8c8c8" stroke-width="1"/><rect x="7.5" y="7.3" width="2" height="1.5" fill="#c8c8c8"/></svg>
<svg style="left:1236px;top:378.2px" width="13" height="11" viewBox="0 0 13 11"><path d="M1.5 5V3.5Q1.5 1 4 1Q6.5 1 6.5 3.5" stroke="#c8c8c8" stroke-width="1" fill="none"/><rect x="4.5" y="5.5" width="8" height="5" rx=".8" fill="none" stroke="#c8c8c8" stroke-width="1"/><rect x="7.5" y="7.3" width="2" height="1.5" fill="#c8c8c8"/></svg>
<svg style="left:1236px;top:394.4px" width="13" height="11" viewBox="0 0 13 11"><path d="M1.5 5V3.5Q1.5 1 4 1Q6.5 1 6.5 3.5" stroke="#c8c8c8" stroke-width="1" fill="none"/><rect x="4.5" y="5.5" width="8" height="5" rx=".8" fill="none" stroke="#c8c8c8" stroke-width="1"/><rect x="7.5" y="7.3" width="2" height="1.5" fill="#c8c8c8"/></svg>
<svg style="left:1257px;top:365.5px" width="4" height="4" viewBox="0 0 4 4"><circle cx="2" cy="2" r="1.7" fill="#e0e0e0"/></svg>
<svg style="left:1257px;top:381.7px" width="4" height="4" viewBox="0 0 4 4"><circle cx="2" cy="2" r="1.7" fill="#e0e0e0"/></svg>
<svg style="left:1257px;top:397.9px" width="4" height="4" viewBox="0 0 4 4"><circle cx="2" cy="2" r="1.7" fill="#e0e0e0"/></svg>
<div class="a" style="left:1161px;top:413px;width:72px;height:48.599999999999994px;background:#545454;border-radius:4px;"></div>
<div class="a" style="left:1161px;top:429.2px;width:72px;height:1px;background:#3d3d3d;border-radius:0px;"></div>
<div class="a" style="left:1161px;top:445.4px;width:72px;height:1px;background:#3d3d3d;border-radius:0px;"></div>
<div class="t" style="left:1161px;top:414.4px;width:72px;text-align:center;color:#e8e8e8">0°</div>
<div class="t" style="left:1161px;top:430.59999999999997px;width:72px;text-align:center;color:#e8e8e8">0°</div>
<div class="t" style="left:1161px;top:446.79999999999995px;width:72px;text-align:center;color:#e8e8e8">0°</div>
<div class="t" style="left:1060px;top:414.4px;width:93px;text-align:right;color:#d8d8d8">Rotation X</div>
<div class="t" style="left:1060px;top:430.59999999999997px;width:93px;text-align:right;color:#d8d8d8">Y</div>
<div class="t" style="left:1060px;top:446.79999999999995px;width:93px;text-align:right;color:#d8d8d8">Z</div>
<svg style="left:1236px;top:416.0px" width="13" height="11" viewBox="0 0 13 11"><path d="M1.5 5V3.5Q1.5 1 4 1Q6.5 1 6.5 3.5" stroke="#c8c8c8" stroke-width="1" fill="none"/><rect x="4.5" y="5.5" width="8" height="5" rx=".8" fill="none" stroke="#c8c8c8" stroke-width="1"/><rect x="7.5" y="7.3" width="2" height="1.5" fill="#c8c8c8"/></svg>
<svg style="left:1236px;top:432.2px" width="13" height="11" viewBox="0 0 13 11"><path d="M1.5 5V3.5Q1.5 1 4 1Q6.5 1 6.5 3.5" stroke="#c8c8c8" stroke-width="1" fill="none"/><rect x="4.5" y="5.5" width="8" height="5" rx=".8" fill="none" stroke="#c8c8c8" stroke-width="1"/><rect x="7.5" y="7.3" width="2" height="1.5" fill="#c8c8c8"/></svg>
<svg style="left:1236px;top:448.4px" width="13" height="11" viewBox="0 0 13 11"><path d="M1.5 5V3.5Q1.5 1 4 1Q6.5 1 6.5 3.5" stroke="#c8c8c8" stroke-width="1" fill="none"/><rect x="4.5" y="5.5" width="8" height="5" rx=".8" fill="none" stroke="#c8c8c8" stroke-width="1"/><rect x="7.5" y="7.3" width="2" height="1.5" fill="#c8c8c8"/></svg>
<svg style="left:1257px;top:419.5px" width="4" height="4" viewBox="0 0 4 4"><circle cx="2" cy="2" r="1.7" fill="#e0e0e0"/></svg>
<svg style="left:1257px;top:435.7px" width="4" height="4" viewBox="0 0 4 4"><circle cx="2" cy="2" r="1.7" fill="#e0e0e0"/></svg>
<svg style="left:1257px;top:451.9px" width="4" height="4" viewBox="0 0 4 4"><circle cx="2" cy="2" r="1.7" fill="#e0e0e0"/></svg>
<div class="a" style="left:1161px;top:487.7px;width:72px;height:48.599999999999994px;background:#545454;border-radius:4px;"></div>
<div class="a" style="left:1161px;top:503.9px;width:72px;height:1px;background:#3d3d3d;border-radius:0px;"></div>
<div class="a" style="left:1161px;top:520.1px;width:72px;height:1px;background:#3d3d3d;border-radius:0px;"></div>
<div class="t" style="left:1161px;top:489.09999999999997px;width:72px;text-align:center;color:#e8e8e8">1.000</div>
<div class="t" style="left:1161px;top:505.29999999999995px;width:72px;text-align:center;color:#e8e8e8">1.000</div>
<div class="t" style="left:1161px;top:521.5px;width:72px;text-align:center;color:#e8e8e8">1.000</div>
<div class="t" style="left:1060px;top:489.09999999999997px;width:93px;text-align:right;color:#d8d8d8">Scale X</div>
<div class="t" style="left:1060px;top:505.29999999999995px;width:93px;text-align:right;color:#d8d8d8">Y</div>
<div class="t" style="left:1060px;top:521.5px;width:93px;text-align:right;color:#d8d8d8">Z</div>
<svg style="left:1236px;top:490.7px" width="13" height="11" viewBox="0 0 13 11"><path d="M1.5 5V3.5Q1.5 1 4 1Q6.5 1 6.5 3.5" stroke="#c8c8c8" stroke-width="1" fill="none"/><rect x="4.5" y="5.5" width="8" height="5" rx=".8" fill="none" stroke="#c8c8c8" stroke-width="1"/><rect x="7.5" y="7.3" width="2" height="1.5" fill="#c8c8c8"/></svg>
<svg style="left:1236px;top:506.9px" width="13" height="11" viewBox="0 0 13 11"><path d="M1.5 5V3.5Q1.5 1 4 1Q6.5 1 6.5 3.5" stroke="#c8c8c8" stroke-width="1" fill="none"/><rect x="4.5" y="5.5" width="8" height="5" rx=".8" fill="none" stroke="#c8c8c8" stroke-width="1"/><rect x="7.5" y="7.3" width="2" height="1.5" fill="#c8c8c8"/></svg>
<svg style="left:1236px;top:523.1px" width="13" height="11" viewBox="0 0 13 11"><path d="M1.5 5V3.5Q1.5 1 4 1Q6.5 1 6.5 3.5" stroke="#c8c8c8" stroke-width="1" fill="none"/><rect x="4.5" y="5.5" width="8" height="5" rx=".8" fill="none" stroke="#c8c8c8" stroke-width="1"/><rect x="7.5" y="7.3" width="2" height="1.5" fill="#c8c8c8"/></svg>
<svg style="left:1257px;top:494.2px" width="4" height="4" viewBox="0 0 4 4"><circle cx="2" cy="2" r="1.7" fill="#e0e0e0"/></svg>
<svg style="left:1257px;top:510.4px" width="4" height="4" viewBox="0 0 4 4"><circle cx="2" cy="2" r="1.7" fill="#e0e0e0"/></svg>
<svg style="left:1257px;top:526.6px" width="4" height="4" viewBox="0 0 4 4"><circle cx="2" cy="2" r="1.7" fill="#e0e0e0"/></svg>
<div class="a" style="left:1161px;top:466.5px;width:72px;height:16px;background:#282828;border-radius:4px;"></div>
<div class="t" style="left:1060px;top:469px;color:#d8d8d8;width:93px;text-align:right">Mode</div>
<div class="t" style="left:1167px;top:469px;color:#e8e8e8;">XYZ Euler</div>
<svg style="left:1224px;top:472px" width="7" height="5" viewBox="0 0 7 5"><path d="M0.5 0.8l3 3 3-3" stroke="#d0d0d0" stroke-width="1.1" fill="none"/></svg>
<svg style="left:1257px;top:473px" width="4" height="4" viewBox="0 0 4 4"><circle cx="2" cy="2" r="1.7" fill="#e0e0e0"/></svg>
<svg style="left:1109px;top:549px" width="5" height="9" viewBox="0 0 5 9"><path d="M0.8 0.8L4.2 4.5L0.8 8.2" stroke="#d0d0d0" stroke-width="1.1" fill="none"/></svg>
<div class="t" style="left:1117px;top:548px;color:#e0e0e0;">Delta Transform</div>
<div class="a" style="left:1088px;top:566px;width:186px;height:20px;background:#3d3d3d;border-radius:4px;"></div>
<svg style="left:1097px;top:571.5px" width="5" height="9" viewBox="0 0 5 9"><path d="M0.8 0.8L4.2 4.5L0.8 8.2" stroke="#d0d0d0" stroke-width="1.1" fill="none"/></svg>
<div class="t" style="left:1106px;top:570.2px;color:#e0e0e0;">Relations</div>
<svg style="left:1258px;top:574px" width="11" height="5" viewBox="0 0 11 5"><rect x="0.0" y="0.0" width="1.3" height="1.3" fill="#8a8a8a"/><rect x="0.0" y="2.7" width="1.3" height="1.3" fill="#8a8a8a"/><rect x="2.7" y="0.0" width="1.3" height="1.3" fill="#8a8a8a"/><rect x="2.7" y="2.7" width="1.3" height="1.3" fill="#8a8a8a"/><rect x="5.4" y="0.0" width="1.3" height="1.3" fill="#8a8a8a"/><rect x="5.4" y="2.7" width="1.3" height="1.3" fill="#8a8a8a"/><rect x="8.100000000000001" y="0.0" width="1.3" height="1.3" fill="#8a8a8a"/><rect x="8.100000000000001" y="2.7" width="1.3" height="1.3" fill="#8a8a8a"/></svg>
<div class="a" style="left:1088px;top:588px;width:186px;height:20px;background:#3d3d3d;border-radius:4px;"></div>
<svg style="left:1097px;top:593.5px" width="5" height="9" viewBox="0 0 5 9"><path d="M0.8 0.8L4.2 4.5L0.8 8.2" stroke="#d0d0d0" stroke-width="1.1" fill="none"/></svg>
<div class="t" style="left:1106px;top:592.2px;color:#e0e0e0;">Collections</div>
<svg style="left:1258px;top:596px" width="11" height="5" viewBox="0 0 11 5"><rect x="0.0" y="0.0" width="1.3" height="1.3" fill="#8a8a8a"/><rect x="0.0" y="2.7" width="1.3" height="1.3" fill="#8a8a8a"/><rect x="2.7" y="0.0" width="1.3" height="1.3" fill="#8a8a8a"/><rect x="2.7" y="2.7" width="1.3" height="1.3" fill="#8a8a8a"/><rect x="5.4" y="0.0" width="1.3" height="1.3" fill="#8a8a8a"/><rect x="5.4" y="2.7" width="1.3" height="1.3" fill="#8a8a8a"/><rect x="8.100000000000001" y="0.0" width="1.3" height="1.3" fill="#8a8a8a"/><rect x="8.100000000000001" y="2.7" width="1.3" height="1.3" fill="#8a8a8a"/></svg>
<div class="a" style="left:1088px;top:610px;width:186px;height:20px;background:#3d3d3d;border-radius:4px;"></div>
<svg style="left:1097px;top:615.5px" width="5" height="9" viewBox="0 0 5 9"><path d="M0.8 0.8L4.2 4.5L0.8 8.2" stroke="#d0d0d0" stroke-width="1.1" fill="none"/></svg>
<div class="t" style="left:1106px;top:614.2px;color:#e0e0e0;">Instancing</div>
<svg style="left:1258px;top:618px" width="11" height="5" viewBox="0 0 11 5"><rect x="0.0" y="0.0" width="1.3" height="1.3" fill="#8a8a8a"/><rect x="0.0" y="2.7" width="1.3" height="1.3" fill="#8a8a8a"/><rect x="2.7" y="0.0" width="1.3" height="1.3" fill="#8a8a8a"/><rect x="2.7" y="2.7" width="1.3" height="1.3" fill="#8a8a8a"/><rect x="5.4" y="0.0" width="1.3" height="1.3" fill="#8a8a8a"/><rect x="5.4" y="2.7" width="1.3" height="1.3" fill="#8a8a8a"/><rect x="8.100000000000001" y="0.0" width="1.3" height="1.3" fill="#8a8a8a"/><rect x="8.100000000000001" y="2.7" width="1.3" height="1.3" fill="#8a8a8a"/></svg>
<div class="a" style="left:1088px;top:632px;width:186px;height:20px;background:#3d3d3d;border-radius:4px;"></div>
<svg style="left:1097px;top:637.5px" width="5" height="9" viewBox="0 0 5 9"><path d="M0.8 0.8L4.2 4.5L0.8 8.2" stroke="#d0d0d0" stroke-width="1.1" fill="none"/></svg>
<div class="t" style="left:1106px;top:636.2px;color:#e0e0e0;">Motion Paths</div>
<svg style="left:1258px;top:640px" width="11" height="5" viewBox="0 0 11 5"><rect x="0.0" y="0.0" width="1.3" height="1.3" fill="#8a8a8a"/><rect x="0.0" y="2.7" width="1.3" height="1.3" fill="#8a8a8a"/><rect x="2.7" y="0.0" width="1.3" height="1.3" fill="#8a8a8a"/><rect x="2.7" y="2.7" width="1.3" height="1.3" fill="#8a8a8a"/><rect x="5.4" y="0.0" width="1.3" height="1.3" fill="#8a8a8a"/><rect x="5.4" y="2.7" width="1.3" height="1.3" fill="#8a8a8a"/><rect x="8.100000000000001" y="0.0" width="1.3" height="1.3" fill="#8a8a8a"/><rect x="8.100000000000001" y="2.7" width="1.3" height="1.3" fill="#8a8a8a"/></svg>
<div class="a" style="left:1088px;top:654px;width:186px;height:20px;background:#3d3d3d;border-radius:4px;"></div>
<svg style="left:1097px;top:659.5px" width="5" height="9" viewBox="0 0 5 9"><path d="M0.8 0.8L4.2 4.5L0.8 8.2" stroke="#d0d0d0" stroke-width="1.1" fill="none"/></svg>
<div class="t" style="left:1106px;top:658.2px;color:#e0e0e0;">Visibility</div>
<svg style="left:1258px;top:662px" width="11" height="5" viewBox="0 0 11 5"><rect x="0.0" y="0.0" width="1.3" height="1.3" fill="#8a8a8a"/><rect x="0.0" y="2.7" width="1.3" height="1.3" fill="#8a8a8a"/><rect x="2.7" y="0.0" width="1.3" height="1.3" fill="#8a8a8a"/><rect x="2.7" y="2.7" width="1.3" height="1.3" fill="#8a8a8a"/><rect x="5.4" y="0.0" width="1.3" height="1.3" fill="#8a8a8a"/><rect x="5.4" y="2.7" width="1.3" height="1.3" fill="#8a8a8a"/><rect x="8.100000000000001" y="0.0" width="1.3" height="1.3" fill="#8a8a8a"/><rect x="8.100000000000001" y="2.7" width="1.3" height="1.3" fill="#8a8a8a"/></svg>
<div class="a" style="left:1088px;top:676px;width:186px;height:20px;background:#3d3d3d;border-radius:4px;"></div>
<svg style="left:1097px;top:681.5px" width="5" height="9" viewBox="0 0 5 9"><path d="M0.8 0.8L4.2 4.5L0.8 8.2" stroke="#d0d0d0" stroke-width="1.1" fill="none"/></svg>
<div class="t" style="left:1106px;top:680.2px;color:#e0e0e0;">Viewport Display</div>
<svg style="left:1258px;top:684px" width="11" height="5" viewBox="0 0 11 5"><rect x="0.0" y="0.0" width="1.3" height="1.3" fill="#8a8a8a"/><rect x="0.0" y="2.7" width="1.3" height="1.3" fill="#8a8a8a"/><rect x="2.7" y="0.0" width="1.3" height="1.3" fill="#8a8a8a"/><rect x="2.7" y="2.7" width="1.3" height="1.3" fill="#8a8a8a"/><rect x="5.4" y="0.0" width="1.3" height="1.3" fill="#8a8a8a"/><rect x="5.4" y="2.7" width="1.3" height="1.3" fill="#8a8a8a"/><rect x="8.100000000000001" y="0.0" width="1.3" height="1.3" fill="#8a8a8a"/><rect x="8.100000000000001" y="2.7" width="1.3" height="1.3" fill="#8a8a8a"/></svg>
<div class="a" style="left:1088px;top:698px;width:186px;height:20px;background:#3d3d3d;border-radius:4px;"></div>
<svg style="left:1097px;top:703.5px" width="5" height="9" viewBox="0 0 5 9"><path d="M0.8 0.8L4.2 4.5L0.8 8.2" stroke="#d0d0d0" stroke-width="1.1" fill="none"/></svg>
<div class="t" style="left:1106px;top:702.2px;color:#e0e0e0;">Line Art</div>
<svg style="left:1258px;top:706px" width="11" height="5" viewBox="0 0 11 5"><rect x="0.0" y="0.0" width="1.3" height="1.3" fill="#8a8a8a"/><rect x="0.0" y="2.7" width="1.3" height="1.3" fill="#8a8a8a"/><rect x="2.7" y="0.0" width="1.3" height="1.3" fill="#8a8a8a"/><rect x="2.7" y="2.7" width="1.3" height="1.3" fill="#8a8a8a"/><rect x="5.4" y="0.0" width="1.3" height="1.3" fill="#8a8a8a"/><rect x="5.4" y="2.7" width="1.3" height="1.3" fill="#8a8a8a"/><rect x="8.100000000000001" y="0.0" width="1.3" height="1.3" fill="#8a8a8a"/><rect x="8.100000000000001" y="2.7" width="1.3" height="1.3" fill="#8a8a8a"/></svg>
<div class="a" style="left:1088px;top:720px;width:186px;height:20px;background:#3d3d3d;border-radius:4px;"></div>
<div class="a" style="left:1px;top:672px;width:1055px;height:20px;background:#303030;border-radius:5px;border-radius:5px 5px 0 0"></div>
<div class="a" style="left:8px;top:674.5px;width:25px;height:15.5px;background:#282828;border-radius:4px;"></div>
<svg style="left:10px;top:676px" width="22" height="12" viewBox="0 0 22 12"><circle cx="6" cy="6" r="5.5" fill="#f0f0f0"/><path d="M7.5 3L4.5 6L7.5 9" stroke="#282828" stroke-width="1.6" fill="none"/><g transform="translate(14,4)"><path d="M0.5 0.8l3 3 3-3" stroke="#d0d0d0" stroke-width="1.1" fill="none"/></g></svg>
<div class="a" style="left:38px;top:674.5px;width:111px;height:15.5px;background:#282828;border-radius:4px;"></div>
<div class="a" style="left:99px;top:674.5px;width:1px;height:15.5px;background:#303030;border-radius:0px;"></div>
<div class="t" style="left:44px;top:676.2px;color:#e0e0e0;">Playback</div>
<svg style="left:91px;top:680px" width="7" height="5" viewBox="0 0 7 5"><path d="M0.5 0.8l3 3 3-3" stroke="#d0d0d0" stroke-width="1.1" fill="none"/></svg>
<div class="t" style="left:105px;top:676.2px;color:#e0e0e0;">Keying</div>
<svg style="left:141px;top:680px" width="7" height="5" viewBox="0 0 7 5"><path d="M0.5 0.8l3 3 3-3" stroke="#d0d0d0" stroke-width="1.1" fill="none"/></svg>
<div class="t" style="left:157px;top:676.2px;color:#e0e0e0;">View</div>
<div class="t" style="left:190px;top:676.2px;color:#e0e0e0;">Marker</div>
<div class="a" style="left:450px;top:674.5px;width:33px;height:15.5px;background:#282828;border-radius:4px;"></div>
<div class="a" style="left:450px;top:674.5px;width:17px;height:15.5px;background:#474747;border-radius:4px;border-radius:4px 0 0 4px"></div>
<svg style="left:454px;top:678px" width="9" height="9" viewBox="0 0 9 9"><circle cx="4.5" cy="4.5" r="3.8" fill="#f0f0f0"/></svg>
<svg style="left:471px;top:681px" width="7" height="5" viewBox="0 0 7 5"><path d="M0.5 0.8l3 3 3-3" stroke="#666" stroke-width="1.1" fill="none"/></svg>
<div class="a" style="left:488px;top:674.5px;width:98px;height:15.5px;background:#474747;border-radius:4px;"></div>
<div class="a" style="left:504.5px;top:674.5px;width:1px;height:15.5px;background:#3f3f3f;border-radius:0px;"></div>
<div class="a" style="left:521px;top:674.5px;width:1px;height:15.5px;background:#3f3f3f;border-radius:0px;"></div>
<div class="a" style="left:537.5px;top:674.5px;width:1px;height:15.5px;background:#3f3f3f;border-radius:0px;"></div>
<div class="a" style="left:554px;top:674.5px;width:1px;height:15.5px;background:#3f3f3f;border-radius:0px;"></div>
<div class="a" style="left:570.5px;top:674.5px;width:1px;height:15.5px;background:#3f3f3f;border-radius:0px;"></div>
<svg style="left:488px;top:675px" width="100" height="15" viewBox="0 0 100 15"><path d="M4.2 3.5V11" stroke="#f0f0f0" stroke-width="1.5"/><path d="M11.5 3.5L5.5 7.25L11.5 11Z" fill="#f0f0f0"/><path d="M17.5 7.25L20.8 3.8L24.1 7.25L20.8 10.7Z M30 3.8L25 7.25L30 10.7Z" fill="#f0f0f0"/><path d="M45 2L36.5 7.25L45 12.5Z" fill="#f0f0f0"/><path d="M53 2L61.5 7.25L53 12.5Z" fill="#f0f0f0"/><path d="M68 3.8L73 7.25L68 10.7Z M74 7.25L77.3 3.8L80.6 7.25L77.3 10.7Z" fill="#f0f0f0"/><path d="M87 3.5L93 7.25L87 11Z" fill="#f0f0f0"/><path d="M94.5 3.5V11" stroke="#f0f0f0" stroke-width="1.5"/></svg>
<div class="a" style="left:821px;top:674.8px;width:61px;height:15.5px;background:#545454;border-radius:4px;"></div>
<div class="t" style="left:821px;top:676.2px;width:61px;text-align:center;color:#e8e8e8">32</div>
<div class="a" style="left:887px;top:674.8px;width:162px;height:15.5px;background:#545454;border-radius:4px;"></div>
<div class="a" style="left:887px;top:674.8px;width:15.5px;height:15.5px;background:#474747;border-radius:4px;border-radius:4px 0 0 4px"></div>
<div class="a" style="left:977px;top:674.8px;width:1px;height:15.5px;background:#3d3d3d;border-radius:0px;"></div>
<svg style="left:889px;top:676px" width="12" height="13" viewBox="0 0 12 13"><circle cx="6" cy="7" r="4.8" fill="none" stroke="#e8e8e8" stroke-width="1.2"/><path d="M6 7V4.5M4.5 1H7.5M6 1V2.3M9.5 2.5L10.8 3.8" stroke="#e8e8e8" stroke-width="1.1"/></svg>
<div class="t" style="left:916px;top:676.2px;color:#e8e8e8;">Start</div>
<div class="t" style="left:959px;top:676.2px;color:#e8e8e8;">1</div>
<div class="t" style="left:990px;top:676.2px;color:#e8e8e8;">End</div>
<div class="t" style="left:1019px;top:676.2px;color:#e8e8e8;">250</div>
<div class="a" style="left:1px;top:692px;width:1055px;height:31px;background:#1d1d1d;border-radius:0px;"></div>
<div class="t" style="left:15.5px;top:696px;width:40px;text-align:center;color:#c8c8c8">0</div>
<div class="t" style="left:54.8px;top:696px;width:40px;text-align:center;color:#c8c8c8">10</div>
<div class="t" style="left:94.0px;top:696px;width:40px;text-align:center;color:#c8c8c8">20</div>
<div class="t" style="left:133.3px;top:696px;width:40px;text-align:center;color:#c8c8c8">30</div>
<div class="t" style="left:172.5px;top:696px;width:40px;text-align:center;color:#c8c8c8">40</div>
<div class="t" style="left:211.8px;top:696px;width:40px;text-align:center;color:#c8c8c8">50</div>
<div class="t" style="left:251.1px;top:696px;width:40px;text-align:center;color:#c8c8c8">60</div>
<div class="t" style="left:290.3px;top:696px;width:40px;text-align:center;color:#c8c8c8">70</div>
<div class="t" style="left:329.6px;top:696px;width:40px;text-align:center;color:#c8c8c8">80</div>
<div class="t" style="left:368.8px;top:696px;width:40px;text-align:center;color:#c8c8c8">90</div>
<div class="t" style="left:408.1px;top:696px;width:40px;text-align:center;color:#c8c8c8">100</div>
<div class="t" style="left:447.4px;top:696px;width:40px;text-align:center;color:#c8c8c8">110</div>
<div class="t" style="left:486.6px;top:696px;width:40px;text-align:center;color:#c8c8c8">120</div>
<div class="t" style="left:525.9px;top:696px;width:40px;text-align:center;color:#c8c8c8">130</div>
<div class="t" style="left:565.1px;top:696px;width:40px;text-align:center;color:#c8c8c8">140</div>
<div class="t" style="left:604.4px;top:696px;width:40px;text-align:center;color:#c8c8c8">150</div>
<div class="t" style="left:643.7px;top:696px;width:40px;text-align:center;color:#c8c8c8">160</div>
<div class="t" style="left:682.9px;top:696px;width:40px;text-align:center;color:#c8c8c8">170</div>
<div class="t" style="left:722.2px;top:696px;width:40px;text-align:center;color:#c8c8c8">180</div>
<div class="t" style="left:761.4px;top:696px;width:40px;text-align:center;color:#c8c8c8">190</div>
<div class="t" style="left:800.7px;top:696px;width:40px;text-align:center;color:#c8c8c8">200</div>
<div class="t" style="left:840.0px;top:696px;width:40px;text-align:center;color:#c8c8c8">210</div>
<div class="t" style="left:879.2px;top:696px;width:40px;text-align:center;color:#c8c8c8">220</div>
<div class="t" style="left:918.5px;top:696px;width:40px;text-align:center;color:#c8c8c8">230</div>
<div class="t" style="left:957.7px;top:696px;width:40px;text-align:center;color:#c8c8c8">240</div>
<div class="t" style="left:997.0px;top:696px;width:40px;text-align:center;color:#c8c8c8">250</div>
<div class="a" style="left:38px;top:711.5px;width:1018px;height:11.5px;background:#282828;border-radius:0px;"></div>
<div class="a" style="left:55px;top:711.5px;width:1px;height:11.5px;background:#1f1f1f;border-radius:0px;"></div>
<div class="a" style="left:75px;top:711.5px;width:1px;height:11.5px;background:#1f1f1f;border-radius:0px;"></div>
<div class="a" style="left:94px;top:711.5px;width:1px;height:11.5px;background:#1f1f1f;border-radius:0px;"></div>
<div class="a" style="left:114px;top:711.5px;width:1px;height:11.5px;background:#1f1f1f;border-radius:0px;"></div>
<div class="a" style="left:134px;top:711.5px;width:1px;height:11.5px;background:#1f1f1f;border-radius:0px;"></div>
<div class="a" style="left:153px;top:711.5px;width:1px;height:11.5px;background:#1f1f1f;border-radius:0px;"></div>
<div class="a" style="left:173px;top:711.5px;width:1px;height:11.5px;background:#1f1f1f;border-radius:0px;"></div>
<div class="a" style="left:193px;top:711.5px;width:1px;height:11.5px;background:#1f1f1f;border-radius:0px;"></div>
<div class="a" style="left:212px;top:711.5px;width:1px;height:11.5px;background:#1f1f1f;border-radius:0px;"></div>
<div class="a" style="left:232px;top:711.5px;width:1px;height:11.5px;background:#1f1f1f;border-radius:0px;"></div>
<div class="a" style="left:251px;top:711.5px;width:1px;height:11.5px;background:#1f1f1f;border-radius:0px;"></div>
<div class="a" style="left:271px;top:711.5px;width:1px;height:11.5px;background:#1f1f1f;border-radius:0px;"></div>
<div class="a" style="left:291px;top:711.5px;width:1px;height:11.5px;background:#1f1f1f;border-radius:0px;"></div>
<div class="a" style="left:310px;top:711.5px;width:1px;height:11.5px;background:#1f1f1f;border-radius:0px;"></div>
<div class="a" style="left:330px;top:711.5px;width:1px;height:11.5px;background:#1f1f1f;border-radius:0px;"></div>
<div class="a" style="left:350px;top:711.5px;width:1px;height:11.5px;background:#1f1f1f;border-radius:0px;"></div>
<div class="a" style="left:369px;top:711.5px;width:1px;height:11.5px;background:#1f1f1f;border-radius:0px;"></div>
<div class="a" style="left:389px;top:711.5px;width:1px;height:11.5px;background:#1f1f1f;border-radius:0px;"></div>
<div class="a" style="left:408px;top:711.5px;width:1px;height:11.5px;background:#1f1f1f;border-radius:0px;"></div>
<div class="a" style="left:428px;top:711.5px;width:1px;height:11.5px;background:#1f1f1f;border-radius:0px;"></div>
<div class="a" style="left:448px;top:711.5px;width:1px;height:11.5px;background:#1f1f1f;border-radius:0px;"></div>
<div class="a" style="left:467px;top:711.5px;width:1px;height:11.5px;background:#1f1f1f;border-radius:0px;"></div>
<div class="a" style="left:487px;top:711.5px;width:1px;height:11.5px;background:#1f1f1f;border-radius:0px;"></div>
<div class="a" style="left:507px;top:711.5px;width:1px;height:11.5px;background:#1f1f1f;border-radius:0px;"></div>
<div class="a" style="left:526px;top:711.5px;width:1px;height:11.5px;background:#1f1f1f;border-radius:0px;"></div>
<div class="a" style="left:546px;top:711.5px;width:1px;height:11.5px;background:#1f1f1f;border-radius:0px;"></div>
<div class="a" style="left:566px;top:711.5px;width:1px;height:11.5px;background:#1f1f1f;border-radius:0px;"></div>
<div class="a" style="left:585px;top:711.5px;width:1px;height:11.5px;background:#1f1f1f;border-radius:0px;"></div>
<div class="a" style="left:605px;top:711.5px;width:1px;height:11.5px;background:#1f1f1f;border-radius:0px;"></div>
<div class="a" style="left:624px;top:711.5px;width:1px;height:11.5px;background:#1f1f1f;border-radius:0px;"></div>
<div class="a" style="left:644px;top:711.5px;width:1px;height:11.5px;background:#1f1f1f;border-radius:0px;"></div>
<div class="a" style="left:664px;top:711.5px;width:1px;height:11.5px;background:#1f1f1f;border-radius:0px;"></div>
<div class="a" style="left:683px;top:711.5px;width:1px;height:11.5px;background:#1f1f1f;border-radius:0px;"></div>
<div class="a" style="left:703px;top:711.5px;width:1px;height:11.5px;background:#1f1f1f;border-radius:0px;"></div>
<div class="a" style="left:723px;top:711.5px;width:1px;height:11.5px;background:#1f1f1f;border-radius:0px;"></div>
<div class="a" style="left:742px;top:711.5px;width:1px;height:11.5px;background:#1f1f1f;border-radius:0px;"></div>
<div class="a" style="left:762px;top:711.5px;width:1px;height:11.5px;background:#1f1f1f;border-radius:0px;"></div>
<div class="a" style="left:781px;top:711.5px;width:1px;height:11.5px;background:#1f1f1f;border-radius:0px;"></div>
<div class="a" style="left:801px;top:711.5px;width:1px;height:11.5px;background:#1f1f1f;border-radius:0px;"></div>
<div class="a" style="left:821px;top:711.5px;width:1px;height:11.5px;background:#1f1f1f;border-radius:0px;"></div>
<div class="a" style="left:840px;top:711.5px;width:1px;height:11.5px;background:#1f1f1f;border-radius:0px;"></div>
<div class="a" style="left:860px;top:711.5px;width:1px;height:11.5px;background:#1f1f1f;border-radius:0px;"></div>
<div class="a" style="left:880px;top:711.5px;width:1px;height:11.5px;background:#1f1f1f;border-radius:0px;"></div>
<div class="a" style="left:899px;top:711.5px;width:1px;height:11.5px;background:#1f1f1f;border-radius:0px;"></div>
<div class="a" style="left:919px;top:711.5px;width:1px;height:11.5px;background:#1f1f1f;border-radius:0px;"></div>
<div class="a" style="left:938px;top:711.5px;width:1px;height:11.5px;background:#1f1f1f;border-radius:0px;"></div>
<div class="a" style="left:958px;top:711.5px;width:1px;height:11.5px;background:#1f1f1f;border-radius:0px;"></div>
<div class="a" style="left:978px;top:711.5px;width:1px;height:11.5px;background:#1f1f1f;border-radius:0px;"></div>
<div class="a" style="left:997px;top:711.5px;width:1px;height:11.5px;background:#1f1f1f;border-radius:0px;"></div>
<div class="a" style="left:1017px;top:711.5px;width:1px;height:11.5px;background:#1f1f1f;border-radius:0px;"></div>
<div class="a" style="left:1037px;top:711.5px;width:1px;height:11.5px;background:#1f1f1f;border-radius:0px;"></div>
<div class="a" style="left:1056px;top:711.5px;width:1px;height:11.5px;background:#1f1f1f;border-radius:0px;"></div>
<div class="a" style="left:8px;top:715px;width:1038px;height:7px;background:#4a4a4a;border-radius:3.5px;"></div>
<svg style="left:8.5px;top:715px" width="7" height="7" viewBox="0 0 7 7"><circle cx="3.5" cy="3.5" r="2.8" fill="#303030" stroke="#5a5a5a" stroke-width=".8"/></svg>
<svg style="left:1038px;top:715px" width="7" height="7" viewBox="0 0 7 7"><circle cx="3.5" cy="3.5" r="2.8" fill="#303030" stroke="#5a5a5a" stroke-width=".8"/></svg>
<div class="a" style="left:160px;top:705px;width:1px;height:18px;background:#4772b3;border-radius:0px;"></div>
<div class="a" style="left:150.5px;top:694.5px;width:21px;height:15.5px;background:#4772b3;border-radius:4px;"></div>
<div class="t" style="left:150.5px;top:696.5px;width:21px;text-align:center;color:#ffffff">32</div>
<svg style="left:2px;top:707px" width="5" height="8" viewBox="0 0 5 8"><path d="M0.8 0.8L4 4L0.8 7.2" stroke="#8a8a8a" stroke-width="1" fill="none"/></svg>
<div class="a" style="left:1049px;top:700px;width:5px;height:22px;background:#2a2a2a;border-radius:2px;"></div>
<svg style="left:1049px;top:705px" width="5" height="8" viewBox="0 0 5 8"><path d="M4 0.8L0.8 4L4 7.2" stroke="#8a8a8a" stroke-width="1" fill="none"/></svg>
<!-- /PANELS -->
</body></html>
